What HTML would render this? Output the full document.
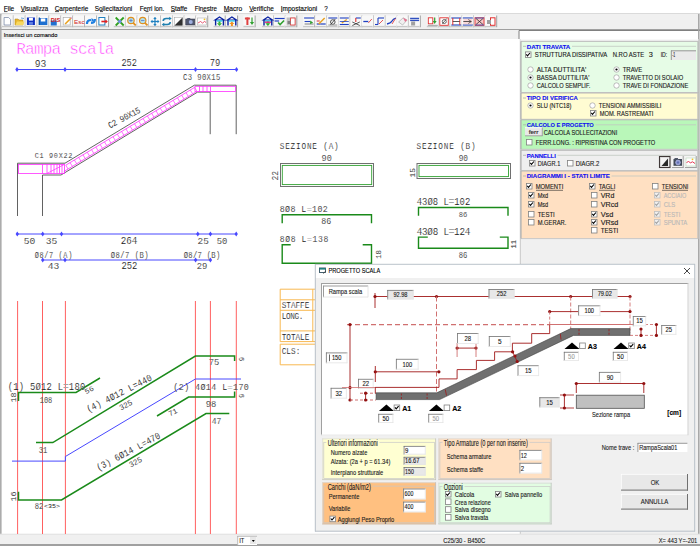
<!DOCTYPE html>
<html><head><meta charset="utf-8"><title>Rampa scala</title>
<style>html,body{margin:0;padding:0;background:#f0f0f0;overflow:hidden}svg{display:block;font-family:"Liberation Sans",sans-serif}</style>
</head><body>
<svg width="700" height="546" viewBox="0 0 700 546">
<rect x="0" y="0" width="700" height="546" fill="#f0f0f0" />
<rect x="0" y="0" width="700" height="14" fill="#ffffff" />
<line x1="0" y1="13.5" x2="700" y2="13.5" stroke="#dadada" stroke-width="1" />
<text x="3.7" y="10.6" font-size="6.67" fill="#000" textLength="10.6" lengthAdjust="spacingAndGlyphs" stroke="#000" stroke-width="0.12">File</text>
<text x="20.7" y="10.6" font-size="6.67" fill="#000" textLength="27.6" lengthAdjust="spacingAndGlyphs" stroke="#000" stroke-width="0.12">Visualizza</text>
<text x="54.7" y="10.6" font-size="6.67" fill="#000" textLength="33.6" lengthAdjust="spacingAndGlyphs" stroke="#000" stroke-width="0.12">Carpenterie</text>
<text x="94.7" y="10.6" font-size="6.67" fill="#000" textLength="37.6" lengthAdjust="spacingAndGlyphs" stroke="#000" stroke-width="0.12">Sollecitazioni</text>
<text x="139.7" y="10.6" font-size="6.67" fill="#000" textLength="24.6" lengthAdjust="spacingAndGlyphs" stroke="#000" stroke-width="0.12">Ferri lon.</text>
<text x="170.7" y="10.6" font-size="6.67" fill="#000" textLength="16.6" lengthAdjust="spacingAndGlyphs" stroke="#000" stroke-width="0.12">Staffe</text>
<text x="194.7" y="10.6" font-size="6.67" fill="#000" textLength="22.3" lengthAdjust="spacingAndGlyphs" stroke="#000" stroke-width="0.12">Finestre</text>
<text x="223.7" y="10.6" font-size="6.67" fill="#000" textLength="18.6" lengthAdjust="spacingAndGlyphs" stroke="#000" stroke-width="0.12">Macro</text>
<text x="249.2" y="10.6" font-size="6.67" fill="#000" textLength="24.6" lengthAdjust="spacingAndGlyphs" stroke="#000" stroke-width="0.12">Verifiche</text>
<text x="280.7" y="10.6" font-size="6.67" fill="#000" textLength="36.6" lengthAdjust="spacingAndGlyphs" stroke="#000" stroke-width="0.12">Impostazioni</text>
<text x="324.3" y="10.6" font-size="6.67" fill="#000" textLength="3.5" lengthAdjust="spacingAndGlyphs" stroke="#000" stroke-width="0.12">?</text>
<line x1="4" y1="11.6" x2="7.5" y2="11.6" stroke="#000" stroke-width="0.7" />
<line x1="21" y1="11.6" x2="25" y2="11.6" stroke="#000" stroke-width="0.7" />
<line x1="55" y1="11.6" x2="59" y2="11.6" stroke="#000" stroke-width="0.7" />
<line x1="100" y1="11.6" x2="103" y2="11.6" stroke="#000" stroke-width="0.7" />
<line x1="145.5" y1="11.6" x2="148.5" y2="11.6" stroke="#000" stroke-width="0.7" />
<line x1="171" y1="11.6" x2="175" y2="11.6" stroke="#000" stroke-width="0.7" />
<line x1="202.5" y1="11.6" x2="206.5" y2="11.6" stroke="#000" stroke-width="0.7" />
<line x1="224" y1="11.6" x2="229.5" y2="11.6" stroke="#000" stroke-width="0.7" />
<line x1="249.5" y1="11.6" x2="253.5" y2="11.6" stroke="#000" stroke-width="0.7" />
<line x1="281" y1="11.6" x2="282.5" y2="11.6" stroke="#000" stroke-width="0.7" />
<rect x="0" y="14" width="700" height="15" fill="#f0f0f0" />
<line x1="0" y1="29.5" x2="700" y2="29.5" stroke="#a0a0a0" stroke-width="1" />
<rect x="0" y="30" width="519" height="9" fill="#f0f0f0" />
<rect x="519" y="30.5" width="181" height="8.5" fill="#ffffff" />
<line x1="519" y1="30.5" x2="700" y2="30.5" stroke="#808080" stroke-width="1" />
<line x1="519" y1="30.5" x2="519" y2="39" stroke="#808080" stroke-width="1" />
<text x="3.7" y="36.9" font-size="6.23" fill="#000" textLength="53.6" lengthAdjust="spacingAndGlyphs" stroke="#000" stroke-width="0.12">Inserisci un comando</text>
<rect x="1.5" y="39" width="518.5" height="495" fill="#ffffff" />
<line x1="0.8" y1="14" x2="0.8" y2="546" stroke="#a8a8a8" stroke-width="1.5" />
<rect x="520" y="39" width="180" height="495" fill="#f0f0f0" />
<line x1="520.3" y1="39" x2="520.3" y2="534" stroke="#c8c8c8" stroke-width="1" />
<line x1="698.8" y1="14" x2="698.8" y2="546" stroke="#a0a0a0" stroke-width="1.4" />
<rect x="0" y="534" width="700" height="12" fill="#f0f0f0" />
<line x1="0" y1="534.2" x2="700" y2="534.2" stroke="#e0e0e0" stroke-width="1" />
<rect x="0" y="544" width="700" height="2" fill="#a0a0a0" />
<rect x="1.6000000000000014" y="15.5" width="11.7" height="11.5" fill="#f8f8f8" />
<line x1="1.6000000000000014" y1="26.5" x2="13.3" y2="26.5" stroke="#c8c8c8" stroke-width="1.4" />
<line x1="12.700000000000001" y1="16" x2="12.700000000000001" y2="27" stroke="#ffffff" stroke-width="0.6" />
<line x1="13.3" y1="15.5" x2="13.3" y2="27.2" stroke="#a0a0a0" stroke-width="1" />
<rect x="13.510000000000002" y="15.5" width="11.7" height="11.5" fill="#f8f8f8" />
<line x1="13.510000000000002" y1="26.5" x2="25.21" y2="26.5" stroke="#c8c8c8" stroke-width="1.4" />
<line x1="24.61" y1="16" x2="24.61" y2="27" stroke="#ffffff" stroke-width="0.6" />
<line x1="25.21" y1="15.5" x2="25.21" y2="27.2" stroke="#a0a0a0" stroke-width="1" />
<rect x="25.420000000000005" y="15.5" width="11.7" height="11.5" fill="#f8f8f8" />
<line x1="25.420000000000005" y1="26.5" x2="37.120000000000005" y2="26.5" stroke="#c8c8c8" stroke-width="1.4" />
<line x1="36.52" y1="16" x2="36.52" y2="27" stroke="#ffffff" stroke-width="0.6" />
<line x1="37.120000000000005" y1="15.5" x2="37.120000000000005" y2="27.2" stroke="#a0a0a0" stroke-width="1" />
<rect x="37.33" y="15.5" width="11.7" height="11.5" fill="#f8f8f8" />
<line x1="37.33" y1="26.5" x2="49.03" y2="26.5" stroke="#c8c8c8" stroke-width="1.4" />
<line x1="48.43" y1="16" x2="48.43" y2="27" stroke="#ffffff" stroke-width="0.6" />
<line x1="49.03" y1="15.5" x2="49.03" y2="27.2" stroke="#a0a0a0" stroke-width="1" />
<rect x="49.239999999999995" y="15.5" width="11.7" height="11.5" fill="#f8f8f8" />
<line x1="49.239999999999995" y1="26.5" x2="60.94" y2="26.5" stroke="#c8c8c8" stroke-width="1.4" />
<line x1="60.339999999999996" y1="16" x2="60.339999999999996" y2="27" stroke="#ffffff" stroke-width="0.6" />
<line x1="60.94" y1="15.5" x2="60.94" y2="27.2" stroke="#a0a0a0" stroke-width="1" />
<rect x="61.14999999999999" y="15.5" width="11.7" height="11.5" fill="#f8f8f8" />
<line x1="61.14999999999999" y1="26.5" x2="72.85" y2="26.5" stroke="#c8c8c8" stroke-width="1.4" />
<line x1="72.24999999999999" y1="16" x2="72.24999999999999" y2="27" stroke="#ffffff" stroke-width="0.6" />
<line x1="72.85" y1="15.5" x2="72.85" y2="27.2" stroke="#a0a0a0" stroke-width="1" />
<rect x="73.06" y="15.5" width="11.7" height="11.5" fill="#f8f8f8" />
<line x1="73.06" y1="26.5" x2="84.76" y2="26.5" stroke="#c8c8c8" stroke-width="1.4" />
<line x1="84.16" y1="16" x2="84.16" y2="27" stroke="#ffffff" stroke-width="0.6" />
<line x1="84.76" y1="15.5" x2="84.76" y2="27.2" stroke="#a0a0a0" stroke-width="1" />
<rect x="84.97" y="15.5" width="11.7" height="11.5" fill="#f8f8f8" />
<line x1="84.97" y1="26.5" x2="96.67" y2="26.5" stroke="#c8c8c8" stroke-width="1.4" />
<line x1="96.07" y1="16" x2="96.07" y2="27" stroke="#ffffff" stroke-width="0.6" />
<line x1="96.67" y1="15.5" x2="96.67" y2="27.2" stroke="#a0a0a0" stroke-width="1" />
<rect x="96.88" y="15.5" width="11.7" height="11.5" fill="#f8f8f8" />
<line x1="96.88" y1="26.5" x2="108.58" y2="26.5" stroke="#c8c8c8" stroke-width="1.4" />
<line x1="107.97999999999999" y1="16" x2="107.97999999999999" y2="27" stroke="#ffffff" stroke-width="0.6" />
<line x1="108.58" y1="15.5" x2="108.58" y2="27.2" stroke="#a0a0a0" stroke-width="1" />
<rect x="113.7" y="15.5" width="11.7" height="11.5" fill="#f8f8f8" />
<line x1="113.7" y1="26.5" x2="125.4" y2="26.5" stroke="#c8c8c8" stroke-width="1.4" />
<line x1="124.8" y1="16" x2="124.8" y2="27" stroke="#ffffff" stroke-width="0.6" />
<line x1="125.4" y1="15.5" x2="125.4" y2="27.2" stroke="#a0a0a0" stroke-width="1" />
<rect x="125.46" y="15.5" width="11.7" height="11.5" fill="#f8f8f8" />
<line x1="125.46" y1="26.5" x2="137.16" y2="26.5" stroke="#c8c8c8" stroke-width="1.4" />
<line x1="136.56" y1="16" x2="136.56" y2="27" stroke="#ffffff" stroke-width="0.6" />
<line x1="137.16" y1="15.5" x2="137.16" y2="27.2" stroke="#a0a0a0" stroke-width="1" />
<rect x="137.22000000000003" y="15.5" width="11.7" height="11.5" fill="#f8f8f8" />
<line x1="137.22000000000003" y1="26.5" x2="148.92000000000002" y2="26.5" stroke="#c8c8c8" stroke-width="1.4" />
<line x1="148.32000000000002" y1="16" x2="148.32000000000002" y2="27" stroke="#ffffff" stroke-width="0.6" />
<line x1="148.92000000000002" y1="15.5" x2="148.92000000000002" y2="27.2" stroke="#a0a0a0" stroke-width="1" />
<rect x="148.98000000000002" y="15.5" width="11.7" height="11.5" fill="#f8f8f8" />
<line x1="148.98000000000002" y1="26.5" x2="160.68" y2="26.5" stroke="#c8c8c8" stroke-width="1.4" />
<line x1="160.08" y1="16" x2="160.08" y2="27" stroke="#ffffff" stroke-width="0.6" />
<line x1="160.68" y1="15.5" x2="160.68" y2="27.2" stroke="#a0a0a0" stroke-width="1" />
<rect x="160.74" y="15.5" width="11.7" height="11.5" fill="#f8f8f8" />
<line x1="160.74" y1="26.5" x2="172.44" y2="26.5" stroke="#c8c8c8" stroke-width="1.4" />
<line x1="171.84" y1="16" x2="171.84" y2="27" stroke="#ffffff" stroke-width="0.6" />
<line x1="172.44" y1="15.5" x2="172.44" y2="27.2" stroke="#a0a0a0" stroke-width="1" />
<rect x="172.5" y="15.5" width="11.7" height="11.5" fill="#f8f8f8" />
<line x1="172.5" y1="26.5" x2="184.2" y2="26.5" stroke="#c8c8c8" stroke-width="1.4" />
<line x1="183.6" y1="16" x2="183.6" y2="27" stroke="#ffffff" stroke-width="0.6" />
<line x1="184.2" y1="15.5" x2="184.2" y2="27.2" stroke="#a0a0a0" stroke-width="1" />
<rect x="184.26000000000002" y="15.5" width="11.7" height="11.5" fill="#f8f8f8" />
<line x1="184.26000000000002" y1="26.5" x2="195.96" y2="26.5" stroke="#c8c8c8" stroke-width="1.4" />
<line x1="195.36" y1="16" x2="195.36" y2="27" stroke="#ffffff" stroke-width="0.6" />
<line x1="195.96" y1="15.5" x2="195.96" y2="27.2" stroke="#a0a0a0" stroke-width="1" />
<rect x="196.02" y="15.5" width="11.7" height="11.5" fill="#f8f8f8" />
<line x1="196.02" y1="26.5" x2="207.72" y2="26.5" stroke="#c8c8c8" stroke-width="1.4" />
<line x1="207.12" y1="16" x2="207.12" y2="27" stroke="#ffffff" stroke-width="0.6" />
<line x1="207.72" y1="15.5" x2="207.72" y2="27.2" stroke="#a0a0a0" stroke-width="1" />
<rect x="213.5" y="15.5" width="11.7" height="11.5" fill="#f8f8f8" />
<line x1="213.5" y1="26.5" x2="225.2" y2="26.5" stroke="#c8c8c8" stroke-width="1.4" />
<line x1="224.6" y1="16" x2="224.6" y2="27" stroke="#ffffff" stroke-width="0.6" />
<line x1="225.2" y1="15.5" x2="225.2" y2="27.2" stroke="#a0a0a0" stroke-width="1" />
<rect x="225.9" y="15.5" width="11.7" height="11.5" fill="#f8f8f8" />
<line x1="225.9" y1="26.5" x2="237.6" y2="26.5" stroke="#c8c8c8" stroke-width="1.4" />
<line x1="237.0" y1="16" x2="237.0" y2="27" stroke="#ffffff" stroke-width="0.6" />
<line x1="237.6" y1="15.5" x2="237.6" y2="27.2" stroke="#a0a0a0" stroke-width="1" />
<rect x="243.4" y="15.5" width="11.7" height="11.5" fill="#f8f8f8" />
<line x1="243.4" y1="26.5" x2="255.1" y2="26.5" stroke="#c8c8c8" stroke-width="1.4" />
<line x1="254.5" y1="16" x2="254.5" y2="27" stroke="#ffffff" stroke-width="0.6" />
<line x1="255.1" y1="15.5" x2="255.1" y2="27.2" stroke="#a0a0a0" stroke-width="1" />
<rect x="261.9" y="15.5" width="11.7" height="11.5" fill="#f8f8f8" />
<line x1="261.9" y1="26.5" x2="273.59999999999997" y2="26.5" stroke="#c8c8c8" stroke-width="1.4" />
<line x1="273.0" y1="16" x2="273.0" y2="27" stroke="#ffffff" stroke-width="0.6" />
<line x1="273.59999999999997" y1="15.5" x2="273.59999999999997" y2="27.2" stroke="#a0a0a0" stroke-width="1" />
<rect x="273.6" y="15.5" width="11.7" height="11.5" fill="#f8f8f8" />
<line x1="273.6" y1="26.5" x2="285.3" y2="26.5" stroke="#c8c8c8" stroke-width="1.4" />
<line x1="284.70000000000005" y1="16" x2="284.70000000000005" y2="27" stroke="#ffffff" stroke-width="0.6" />
<line x1="285.3" y1="15.5" x2="285.3" y2="27.2" stroke="#a0a0a0" stroke-width="1" />
<rect x="285.1" y="15.5" width="11.7" height="11.5" fill="#f8f8f8" />
<line x1="285.1" y1="26.5" x2="296.8" y2="26.5" stroke="#c8c8c8" stroke-width="1.4" />
<line x1="296.20000000000005" y1="16" x2="296.20000000000005" y2="27" stroke="#ffffff" stroke-width="0.6" />
<line x1="296.8" y1="15.5" x2="296.8" y2="27.2" stroke="#a0a0a0" stroke-width="1" />
<polygon points="4.100000000000001,17.5 8.600000000000001,17.5 10.600000000000001,19.5 10.600000000000001,25 4.100000000000001,25" fill="#ffffff" stroke="#7080a0" stroke-width="0.7" />
<polygon points="15.010000000000002,19 18.01,19 19.01,20 23.01,20 23.01,25 15.010000000000002,25" fill="#e8b830" stroke="#b08010" stroke-width="0.5" />
<polygon points="15.510000000000002,25 17.01,21.5 24.51,21.5 23.01,25" fill="#f8d860" stroke="none" stroke-width="1" />
<line x1="21.01" y1="18" x2="24.01" y2="18.5" stroke="#5090d0" stroke-width="0.8" />
<rect x="26.920000000000005" y="17.5" width="8" height="7.5" fill="#1030c0" />
<rect x="28.920000000000005" y="17.8" width="4" height="2.8" fill="#ffffff" />
<rect x="28.920000000000005" y="22" width="4" height="2.8" fill="#6080e0" />
<rect x="38.83" y="18" width="8.5" height="7" fill="#2070d0" />
<rect x="40.83" y="18.5" width="4.5" height="3" fill="#ffffff" />
<line x1="39.33" y1="17.5" x2="39.33" y2="25" stroke="#1050a0" stroke-width="1.2" />
<rect x="50.739999999999995" y="20.5" width="6" height="5" fill="#2070d0" />
<text x="50.739999999999995" y="21.7" font-size="5.2" fill="#d02020" font-weight="bold" textLength="9.5" lengthAdjust="spacingAndGlyphs" >DIS</text>
<rect x="63.14999999999999" y="17.5" width="7" height="7.5" fill="#ffffff" stroke="#a0a0a0" stroke-width="0.6" />
<line x1="65.14999999999999" y1="24" x2="71.14999999999999" y2="18" stroke="#e8a020" stroke-width="1.6" />
<line x1="70.64999999999999" y1="18.5" x2="71.64999999999999" y2="17.5" stroke="#e090c0" stroke-width="1.4" />
<text x="74.06" y="24" font-size="6" fill="#d02020" textLength="10.5" lengthAdjust="spacingAndGlyphs" >Esc</text>
<path d="M86.97,24 q0,-4 4,-4 M94.97,19 q0,4 -4,4" stroke="#2080e0" stroke-width="2.2" fill="none"/>
<polygon points="91.47,18 94.47,20.2 91.47,22" fill="#2080e0" stroke="none" stroke-width="1" />
<rect x="98.88" y="17.5" width="6" height="7.5" fill="#ffffff" stroke="#2080c0" stroke-width="1" />
<line x1="101.38" y1="21.5" x2="106.88" y2="21.5" stroke="#e02020" stroke-width="1.6" />
<polygon points="105.38,19.5 107.88,21.5 105.38,23.5" fill="#e02020" stroke="none" stroke-width="1" />
<line x1="115.7" y1="17.5" x2="123.7" y2="25.5" stroke="#30a020" stroke-width="1.8" />
<line x1="123.7" y1="17.5" x2="115.7" y2="25.5" stroke="#30a020" stroke-width="1.8" />
<circle cx="119.7" cy="21.5" r="1.8" fill="#7090e0" stroke="none" stroke-width="1"/>
<circle cx="130.95999999999998" cy="20.5" r="3.2" fill="#b0e0f0" stroke="#e09020" stroke-width="1.2"/>
<line x1="133.16" y1="22.8" x2="135.76" y2="25.3" stroke="#e09020" stroke-width="1.8" />
<line x1="129.26" y1="20.5" x2="132.66" y2="20.5" stroke="#5070c0" stroke-width="0.7" />
<line x1="130.95999999999998" y1="18.8" x2="130.95999999999998" y2="22.2" stroke="#5070c0" stroke-width="0.7" />
<circle cx="142.72000000000003" cy="20.5" r="3.2" fill="#b0e0f0" stroke="#e09020" stroke-width="1.2"/>
<line x1="144.92000000000002" y1="22.8" x2="147.52000000000004" y2="25.3" stroke="#e09020" stroke-width="1.8" />
<line x1="141.02000000000004" y1="20.5" x2="144.42000000000002" y2="20.5" stroke="#5070c0" stroke-width="0.7" />
<line x1="154.98000000000002" y1="17.5" x2="154.98000000000002" y2="25.5" stroke="#2080c0" stroke-width="1.2" />
<line x1="150.98000000000002" y1="21.5" x2="158.98000000000002" y2="21.5" stroke="#2080c0" stroke-width="1.2" />
<polygon points="153.28000000000003,19 154.98000000000002,17 156.68,19" fill="#2080c0" stroke="none" stroke-width="1" />
<polygon points="153.28000000000003,24 154.98000000000002,26 156.68,24" fill="#2080c0" stroke="none" stroke-width="1" />
<polygon points="152.48000000000002,19.8 150.48000000000002,21.5 152.48000000000002,23.2" fill="#2080c0" stroke="none" stroke-width="1" />
<polygon points="157.48000000000002,19.8 159.48000000000002,21.5 157.48000000000002,23.2" fill="#2080c0" stroke="none" stroke-width="1" />
<path d="M163.24,21 q0,-2.5 3,-2.5 h4 M170.24,22 q0,2.5 -3,2.5 h-4" stroke="#2080b0" stroke-width="1.6" fill="none"/>
<polygon points="169.24,16.8 171.74,18.5 169.24,20.2" fill="#2080b0" stroke="none" stroke-width="1" />
<polygon points="164.24,22.8 161.74,24.5 164.24,26.2" fill="#2080b0" stroke="none" stroke-width="1" />
<rect x="174.5" y="17.5" width="8" height="8" fill="#ffffff" stroke="#a0a0a0" stroke-width="0.5" />
<polygon points="182.5,17.5 182.5,25.5 174.5,25.5" fill="#303030" stroke="none" stroke-width="1" />
<rect x="185.76000000000002" y="19" width="9" height="6" fill="#505870" stroke="#303040" stroke-width="0.5" />
<circle cx="190.76000000000002" cy="22" r="2" fill="#a0b0e0" stroke="none" stroke-width="1"/>
<rect x="187.26000000000002" y="18" width="3" height="1.5" fill="#505870" />
<rect x="197.52" y="18" width="9" height="7" fill="#ffffff" stroke="#b0b0b0" stroke-width="0.6" />
<polyline points="198.02,23 200.52,21.5 202.52,23 204.52,21.5 206.02,22.5" stroke="#e03050" stroke-width="0.8" fill="none" />
<circle cx="204.52" cy="19.3" r="0.9" fill="#f0c020" stroke="none" stroke-width="1"/>
<polygon points="215,20 219.5,17 224,20" fill="none" stroke="#0820a0" stroke-width="1.2" />
<line x1="215.6" y1="20" x2="215.6" y2="25.5" stroke="#0820a0" stroke-width="1.4" />
<line x1="223.4" y1="20" x2="223.4" y2="25.5" stroke="#0820a0" stroke-width="1.4" />
<rect x="216.5" y="20.2" width="6" height="1.5" fill="#40d0f0" />
<rect x="218.5" y="21.5" width="2" height="2" fill="#30b030" />
<polygon points="217,23.3 219.5,26 222,23.3" fill="#30b030" stroke="none" stroke-width="1" />
<polygon points="227.4,20 231.9,17 236.4,20" fill="none" stroke="#0820a0" stroke-width="1.2" />
<line x1="228.0" y1="20" x2="228.0" y2="25.5" stroke="#0820a0" stroke-width="1.4" />
<line x1="235.8" y1="20" x2="235.8" y2="25.5" stroke="#0820a0" stroke-width="1.4" />
<rect x="228.9" y="20.2" width="6" height="1.5" fill="#40d0f0" />
<polygon points="229.4,24 231.9,21.5 234.4,24" fill="#f09020" stroke="none" stroke-width="1" />
<rect x="230.9" y="23.8" width="2" height="2.2" fill="#f09020" />
<rect x="244.9" y="17.5" width="5" height="2" fill="#e04040" />
<rect x="246.4" y="17.5" width="2" height="7.5" fill="#e04040" />
<rect x="251.4" y="17.5" width="1.2" height="5" fill="#30a030" />
<polygon points="249.9,22 252.0,25 254.1,22" fill="#30a030" stroke="none" stroke-width="1" />
<polygon points="263.4,20 267.9,17 272.4,20" fill="none" stroke="#0820a0" stroke-width="1.2" />
<line x1="264.0" y1="20" x2="264.0" y2="25.5" stroke="#0820a0" stroke-width="1.4" />
<line x1="271.79999999999995" y1="20" x2="271.79999999999995" y2="25.5" stroke="#0820a0" stroke-width="1.4" />
<rect x="264.9" y="20.2" width="6" height="1.5" fill="#40d0f0" />
<rect x="266.9" y="21.5" width="2" height="2" fill="#30b030" />
<polygon points="265.4,23.3 267.9,26 270.4,23.3" fill="#30b030" stroke="none" stroke-width="1" />
<rect x="264.9" y="21.5" width="6" height="1.4" fill="#e03080" />
<rect x="274.6" y="18" width="10" height="7" fill="#f8f8f8" />
<line x1="274.6" y1="18.5" x2="284.6" y2="18.5" stroke="#2040c0" stroke-width="1.2" />
<line x1="274.6" y1="21" x2="279.1" y2="21" stroke="#2040c0" stroke-width="1.2" />
<polyline points="278.1,22.5 280.1,24.5 284.1,20.5" stroke="#30a030" stroke-width="1.6" fill="none" />
<rect x="286.6" y="17.5" width="9" height="8" fill="#c0c0c0" />
<rect x="290.6" y="18" width="4.5" height="7" fill="#ffffff" stroke="#e03030" stroke-width="0.8" />
<rect x="287.6" y="21" width="3" height="3" fill="#808080" />
<rect x="303.1" y="15.5" width="11.7" height="11.5" fill="#f8f8f8" />
<line x1="303.1" y1="26.5" x2="314.8" y2="26.5" stroke="#c8c8c8" stroke-width="1.4" />
<line x1="314.20000000000005" y1="16" x2="314.20000000000005" y2="27" stroke="#ffffff" stroke-width="0.6" />
<line x1="314.8" y1="15.5" x2="314.8" y2="27.2" stroke="#a0a0a0" stroke-width="1" />
<rect x="304.1" y="17.5" width="10" height="8" fill="#f8f8f8" />
<line x1="304.1" y1="18" x2="314.1" y2="18" stroke="#2040c0" stroke-width="1.1" />
<line x1="304.6" y1="21.5" x2="310.1" y2="21.5" stroke="#2040c0" stroke-width="1.1" />
<line x1="304.6" y1="24" x2="313.6" y2="24" stroke="#808080" stroke-width="1" />
<polygon points="310.1,20.5 313.1,22.5 310.1,24.3" fill="#30a030" stroke="none" stroke-width="1" />
<rect x="315.2" y="15.5" width="11.7" height="11.5" fill="#f8f8f8" />
<line x1="315.2" y1="26.5" x2="326.9" y2="26.5" stroke="#c8c8c8" stroke-width="1.4" />
<line x1="326.3" y1="16" x2="326.3" y2="27" stroke="#ffffff" stroke-width="0.6" />
<line x1="326.9" y1="15.5" x2="326.9" y2="27.2" stroke="#a0a0a0" stroke-width="1" />
<rect x="316.2" y="17.5" width="10" height="8" fill="#f8f8f8" />
<line x1="316.7" y1="24" x2="320.7" y2="24" stroke="#2040c0" stroke-width="1.2" />
<line x1="320.7" y1="24" x2="325.7" y2="24" stroke="#2040c0" stroke-width="1.2" />
<line x1="318.7" y1="24" x2="324.7" y2="18" stroke="#e8a020" stroke-width="1.4" />
<line x1="319.7" y1="21" x2="316.7" y2="21" stroke="#e03030" stroke-width="1" />
<rect x="326.8" y="15.5" width="11.7" height="11.5" fill="#f8f8f8" />
<line x1="326.8" y1="26.5" x2="338.5" y2="26.5" stroke="#c8c8c8" stroke-width="1.4" />
<line x1="337.90000000000003" y1="16" x2="337.90000000000003" y2="27" stroke="#ffffff" stroke-width="0.6" />
<line x1="338.5" y1="15.5" x2="338.5" y2="27.2" stroke="#a0a0a0" stroke-width="1" />
<rect x="327.8" y="17.5" width="10" height="8" fill="#f8f8f8" />
<line x1="328.3" y1="18" x2="337.3" y2="18" stroke="#2040c0" stroke-width="1.1" />
<circle cx="332.8" cy="22" r="2.3" fill="none" stroke="#303030" stroke-width="0.8"/>
<line x1="330.3" y1="25" x2="335.3" y2="19" stroke="#303030" stroke-width="0.8" />
<line x1="328.3" y1="25" x2="337.3" y2="25" stroke="#808080" stroke-width="0.8" />
<rect x="338.3" y="15.5" width="11.7" height="11.5" fill="#f8f8f8" />
<line x1="338.3" y1="26.5" x2="350.0" y2="26.5" stroke="#c8c8c8" stroke-width="1.4" />
<line x1="349.40000000000003" y1="16" x2="349.40000000000003" y2="27" stroke="#ffffff" stroke-width="0.6" />
<line x1="350.0" y1="15.5" x2="350.0" y2="27.2" stroke="#a0a0a0" stroke-width="1" />
<rect x="339.3" y="17.5" width="10" height="8" fill="#f8f8f8" />
<line x1="339.8" y1="18" x2="348.8" y2="18" stroke="#2040c0" stroke-width="1.1" />
<line x1="339.8" y1="24.5" x2="348.8" y2="24.5" stroke="#2040c0" stroke-width="1.1" />
<line x1="341.8" y1="23" x2="346.8" y2="19.5" stroke="#e8a020" stroke-width="1.5" />
<line x1="339.8" y1="21.5" x2="348.8" y2="21.5" stroke="#2040c0" stroke-width="0.8" />
<rect x="350.3" y="15.5" width="11.7" height="11.5" fill="#f8f8f8" />
<line x1="350.3" y1="26.5" x2="362.0" y2="26.5" stroke="#c8c8c8" stroke-width="1.4" />
<line x1="361.40000000000003" y1="16" x2="361.40000000000003" y2="27" stroke="#ffffff" stroke-width="0.6" />
<line x1="362.0" y1="15.5" x2="362.0" y2="27.2" stroke="#a0a0a0" stroke-width="1" />
<rect x="351.3" y="17.5" width="10" height="8" fill="#f8f8f8" />
<line x1="355.8" y1="18" x2="360.8" y2="18" stroke="#2040c0" stroke-width="1.1" />
<line x1="355.8" y1="18" x2="355.8" y2="22" stroke="#e03030" stroke-width="1.1" />
<line x1="352.3" y1="22" x2="359.8" y2="25.5" stroke="#303030" stroke-width="0.8" />
<line x1="359.8" y1="22" x2="352.3" y2="25.5" stroke="#303030" stroke-width="0.8" />
<rect x="361.8" y="15.5" width="11.7" height="11.5" fill="#f8f8f8" />
<line x1="361.8" y1="26.5" x2="373.5" y2="26.5" stroke="#c8c8c8" stroke-width="1.4" />
<line x1="372.90000000000003" y1="16" x2="372.90000000000003" y2="27" stroke="#ffffff" stroke-width="0.6" />
<line x1="373.5" y1="15.5" x2="373.5" y2="27.2" stroke="#a0a0a0" stroke-width="1" />
<rect x="362.8" y="17.5" width="10" height="8" fill="#f8f8f8" />
<line x1="363.3" y1="21.5" x2="368.3" y2="21.5" stroke="#2040c0" stroke-width="1.3" />
<line x1="368.3" y1="23" x2="371.8" y2="19" stroke="#e03030" stroke-width="0.8" />
<rect x="373.5" y="15.5" width="11.7" height="11.5" fill="#f8f8f8" />
<line x1="373.5" y1="26.5" x2="385.2" y2="26.5" stroke="#c8c8c8" stroke-width="1.4" />
<line x1="384.6" y1="16" x2="384.6" y2="27" stroke="#ffffff" stroke-width="0.6" />
<line x1="385.2" y1="15.5" x2="385.2" y2="27.2" stroke="#a0a0a0" stroke-width="1" />
<rect x="374.5" y="17.5" width="10" height="8" fill="#f8f8f8" />
<line x1="375" y1="24.5" x2="378" y2="24.5" stroke="#2040c0" stroke-width="1.1" />
<line x1="378" y1="24.5" x2="378" y2="18" stroke="#2040c0" stroke-width="1.1" />
<line x1="378" y1="18" x2="384" y2="18" stroke="#2040c0" stroke-width="1.1" />
<line x1="379" y1="24" x2="383" y2="20" stroke="#e03030" stroke-width="0.8" />
<rect x="385.5" y="15.5" width="11.7" height="11.5" fill="#f8f8f8" />
<line x1="385.5" y1="26.5" x2="397.2" y2="26.5" stroke="#c8c8c8" stroke-width="1.4" />
<line x1="396.6" y1="16" x2="396.6" y2="27" stroke="#ffffff" stroke-width="0.6" />
<line x1="397.2" y1="15.5" x2="397.2" y2="27.2" stroke="#a0a0a0" stroke-width="1" />
<rect x="386.5" y="17.5" width="10" height="8" fill="#f8f8f8" />
<path d="M387,24 q4,-1 5,-3 t4,-3" stroke="#2040c0" stroke-width="1.3" fill="none"/>
<line x1="392" y1="24" x2="395.5" y2="18.5" stroke="#e03030" stroke-width="0.8" />
<rect x="396.6" y="15.5" width="11.7" height="11.5" fill="#f8f8f8" />
<line x1="396.6" y1="26.5" x2="408.3" y2="26.5" stroke="#c8c8c8" stroke-width="1.4" />
<line x1="407.70000000000005" y1="16" x2="407.70000000000005" y2="27" stroke="#ffffff" stroke-width="0.6" />
<line x1="408.3" y1="15.5" x2="408.3" y2="27.2" stroke="#a0a0a0" stroke-width="1" />
<rect x="397.6" y="17.5" width="10" height="8" fill="#f8f8f8" />
<polygon points="398.6,22 403.1,17.8 407.1,20 402.6,25" fill="#f0f0f0" stroke="#a0a0a0" stroke-width="0.6" />
<polygon points="403.1,17.8 407.1,20 405.1,22" fill="#e87090" stroke="none" stroke-width="1" />
<rect x="408.6" y="15.5" width="11.7" height="11.5" fill="#f8f8f8" />
<line x1="408.6" y1="26.5" x2="420.3" y2="26.5" stroke="#c8c8c8" stroke-width="1.4" />
<line x1="419.70000000000005" y1="16" x2="419.70000000000005" y2="27" stroke="#ffffff" stroke-width="0.6" />
<line x1="420.3" y1="15.5" x2="420.3" y2="27.2" stroke="#a0a0a0" stroke-width="1" />
<rect x="409.6" y="17.5" width="10" height="8" fill="#f8f8f8" />
<line x1="410.1" y1="18.5" x2="419.1" y2="18.5" stroke="#3050c0" stroke-width="1.5" />
<line x1="410.1" y1="20.5" x2="419.1" y2="20.5" stroke="#3050c0" stroke-width="1.2" />
<rect x="411.1" y="21.5" width="4" height="4" fill="#a0a0a0" />
<rect x="426.8" y="15.5" width="11.7" height="11.5" fill="#f8f8f8" />
<line x1="426.8" y1="26.5" x2="438.5" y2="26.5" stroke="#c8c8c8" stroke-width="1.4" />
<line x1="437.90000000000003" y1="16" x2="437.90000000000003" y2="27" stroke="#ffffff" stroke-width="0.6" />
<line x1="438.5" y1="15.5" x2="438.5" y2="27.2" stroke="#a0a0a0" stroke-width="1" />
<rect x="427.8" y="17.5" width="10" height="8" fill="#f8f8f8" />
<rect x="428.3" y="17.8" width="4.5" height="6" fill="#ffffff" stroke="#e03030" stroke-width="0.9" />
<rect x="434.1" y="17.5" width="1.2" height="4" fill="#30a030" />
<polygon points="432.8,21 434.7,24 436.6,21" fill="#30a030" stroke="none" stroke-width="1" />
<rect x="427.8" y="24.8" width="10" height="1.2" fill="#b0b0b0" />
<rect x="438.3" y="15.5" width="11.7" height="11.5" fill="#f8f8f8" />
<line x1="438.3" y1="26.5" x2="450.0" y2="26.5" stroke="#c8c8c8" stroke-width="1.4" />
<line x1="449.40000000000003" y1="16" x2="449.40000000000003" y2="27" stroke="#ffffff" stroke-width="0.6" />
<line x1="450.0" y1="15.5" x2="450.0" y2="27.2" stroke="#a0a0a0" stroke-width="1" />
<rect x="439.3" y="17.5" width="10" height="8" fill="#f8f8f8" />
<rect x="439.8" y="17.8" width="8.5" height="7.5" fill="#ffffff" stroke="#e03030" stroke-width="0.9" />
<circle cx="444.3" cy="21.5" r="2" fill="none" stroke="#303030" stroke-width="0.7"/>
<line x1="442.3" y1="24" x2="446.8" y2="18.5" stroke="#303030" stroke-width="0.7" />
<rect x="450.3" y="15.5" width="11.7" height="11.5" fill="#f8f8f8" />
<line x1="450.3" y1="26.5" x2="462.0" y2="26.5" stroke="#c8c8c8" stroke-width="1.4" />
<line x1="461.40000000000003" y1="16" x2="461.40000000000003" y2="27" stroke="#ffffff" stroke-width="0.6" />
<line x1="462.0" y1="15.5" x2="462.0" y2="27.2" stroke="#a0a0a0" stroke-width="1" />
<rect x="451.3" y="17.5" width="10" height="8" fill="#f8f8f8" />
<rect x="451.3" y="17.8" width="10" height="7.5" fill="#ffffff" stroke="#3050c0" stroke-width="0" />
<line x1="451.3" y1="18" x2="461.3" y2="18" stroke="#3050c0" stroke-width="1.2" />
<line x1="451.3" y1="25" x2="461.3" y2="25" stroke="#3050c0" stroke-width="1.2" />
<line x1="452.8" y1="18" x2="452.8" y2="25" stroke="#e03030" stroke-width="1" />
<line x1="459.8" y1="18" x2="459.8" y2="25" stroke="#e03030" stroke-width="1" />
<line x1="452.8" y1="21.5" x2="459.8" y2="21.5" stroke="#303030" stroke-width="0.8" />
<rect x="461.8" y="15.5" width="11.7" height="11.5" fill="#f8f8f8" />
<line x1="461.8" y1="26.5" x2="473.5" y2="26.5" stroke="#c8c8c8" stroke-width="1.4" />
<line x1="472.90000000000003" y1="16" x2="472.90000000000003" y2="27" stroke="#ffffff" stroke-width="0.6" />
<line x1="473.5" y1="15.5" x2="473.5" y2="27.2" stroke="#a0a0a0" stroke-width="1" />
<rect x="462.8" y="17.5" width="10" height="8" fill="#f8f8f8" />
<line x1="462.8" y1="18" x2="472.8" y2="18" stroke="#3050c0" stroke-width="1.2" />
<line x1="462.8" y1="25" x2="472.8" y2="25" stroke="#3050c0" stroke-width="1.2" />
<rect x="463.3" y="18.8" width="9" height="5.5" fill="#f8d8d8" />
<line x1="463.3" y1="21.5" x2="471.3" y2="21.5" stroke="#303030" stroke-width="0.8" />
<line x1="468.3" y1="19.5" x2="471.3" y2="21.5" stroke="#303030" stroke-width="0.7" />
<line x1="468.3" y1="23.5" x2="471.3" y2="21.5" stroke="#303030" stroke-width="0.7" />
<rect x="473.5" y="15.5" width="11.7" height="11.5" fill="#f8f8f8" />
<line x1="473.5" y1="26.5" x2="485.2" y2="26.5" stroke="#c8c8c8" stroke-width="1.4" />
<line x1="484.6" y1="16" x2="484.6" y2="27" stroke="#ffffff" stroke-width="0.6" />
<line x1="485.2" y1="15.5" x2="485.2" y2="27.2" stroke="#a0a0a0" stroke-width="1" />
<rect x="474.5" y="17.5" width="10" height="8" fill="#f8f8f8" />
<rect x="475" y="17.8" width="9" height="7.5" fill="#f8c8c8" stroke="#e03030" stroke-width="0.9" />
<line x1="476" y1="18.5" x2="483" y2="24.5" stroke="#303030" stroke-width="0.8" />
<line x1="483" y1="18.5" x2="476" y2="24.5" stroke="#303030" stroke-width="0.8" />
<line x1="475" y1="18" x2="484" y2="18" stroke="#3050c0" stroke-width="0.8" />
<line x1="475" y1="25" x2="484" y2="25" stroke="#3050c0" stroke-width="0.8" />
<rect x="485.0" y="15.5" width="11.7" height="11.5" fill="#f8f8f8" />
<line x1="485.0" y1="26.5" x2="496.7" y2="26.5" stroke="#c8c8c8" stroke-width="1.4" />
<line x1="496.1" y1="16" x2="496.1" y2="27" stroke="#ffffff" stroke-width="0.6" />
<line x1="496.7" y1="15.5" x2="496.7" y2="27.2" stroke="#a0a0a0" stroke-width="1" />
<rect x="486.0" y="17.5" width="10" height="8" fill="#f8f8f8" />
<rect x="490.5" y="17.8" width="4.5" height="7.5" fill="#ffffff" stroke="#e03030" stroke-width="1" />
<rect x="487.0" y="20" width="4" height="4" fill="#a0a0a0" />
<text transform="translate(16.2,53.8) scale(1,1.0)" font-size="16.06" font-family="Liberation Mono" fill="#ff40ff" textLength="98.1" lengthAdjust="spacing" stroke="#fff" stroke-width="0.5">Rampa scala</text>
<line x1="17" y1="69.5" x2="236.5" y2="69.5" stroke="#4848ff" stroke-width="1.0" />
<polygon points="15.3,69.5 17,67.12 18.7,69.5 17,71.88" fill="#4848ff" stroke="none" stroke-width="1" />
<polygon points="63.3,69.5 65,67.12 66.7,69.5 65,71.88" fill="#4848ff" stroke="none" stroke-width="1" />
<polygon points="193.8,69.5 195.5,67.12 197.2,69.5 195.5,71.88" fill="#4848ff" stroke="none" stroke-width="1" />
<polygon points="234.8,69.5 236.5,67.12 238.2,69.5 236.5,71.88" fill="#4848ff" stroke="none" stroke-width="1" />
<text transform="translate(34.7,66.6) scale(1,1.18)" font-size="9.24" font-family="Liberation Mono" fill="#202020" textLength="11.6" lengthAdjust="spacingAndGlyphs" stroke="#fff" stroke-width="0.12">93</text>
<text transform="translate(121.4,66.4) scale(1,1.18)" font-size="9.24" font-family="Liberation Mono" fill="#202020" textLength="15.5" lengthAdjust="spacingAndGlyphs" stroke="#fff" stroke-width="0.12">252</text>
<text transform="translate(209.7,66.4) scale(1,1.18)" font-size="9.24" font-family="Liberation Mono" fill="#202020" textLength="10.6" lengthAdjust="spacingAndGlyphs" stroke="#fff" stroke-width="0.12">79</text>
<text transform="translate(183.1,80) scale(1,1.18)" font-size="7.19" font-family="Liberation Mono" fill="#202020" textLength="37.2" lengthAdjust="spacing" stroke="#fff" stroke-width="0.12">C3 90X15</text>
<text transform="translate(34.7,158.3) scale(1,1.18)" font-size="6.81" font-family="Liberation Mono" fill="#202020" textLength="37.6" lengthAdjust="spacing" stroke="#fff" stroke-width="0.12">C1 90X22</text>
<polyline points="17.5,216 17.5,163.2 65,163.2 194.4,85.2 236.2,85.2 236.2,134.2" stroke="#505050" stroke-width="0.9" fill="none" />
<polyline points="42.5,216 42.5,175 61,175 197.6,92.1 210.2,92.1 210.2,134.2" stroke="#505050" stroke-width="0.9" fill="none" />
<rect x="18.5" y="164.4" width="46" height="9" fill="none" stroke="#ff30ff" stroke-width="0.8" />
<rect x="195" y="86.3" width="40.5" height="5.2" fill="none" stroke="#ff30ff" stroke-width="0.8" />
<line x1="42.5" y1="164.4" x2="42.5" y2="173.4" stroke="#ff30ff" stroke-width="0.8" />
<line x1="47" y1="164.4" x2="47" y2="173.4" stroke="#ff30ff" stroke-width="0.8" />
<line x1="51" y1="164.4" x2="51" y2="173.4" stroke="#ff30ff" stroke-width="0.8" />
<line x1="54" y1="164.4" x2="54" y2="173.4" stroke="#ff30ff" stroke-width="0.8" />
<line x1="57" y1="164.4" x2="57" y2="173.4" stroke="#ff30ff" stroke-width="0.8" />
<line x1="59.5" y1="164.4" x2="59.5" y2="173.4" stroke="#ff30ff" stroke-width="0.8" />
<line x1="62" y1="164.4" x2="62" y2="173.4" stroke="#ff30ff" stroke-width="0.8" />
<line x1="199.5" y1="86.3" x2="199.5" y2="91.5" stroke="#ff30ff" stroke-width="0.8" />
<line x1="203" y1="86.3" x2="203" y2="91.5" stroke="#ff30ff" stroke-width="0.8" />
<line x1="207" y1="86.3" x2="207" y2="91.5" stroke="#ff30ff" stroke-width="0.8" />
<line x1="210.5" y1="86.3" x2="210.5" y2="91.5" stroke="#ff30ff" stroke-width="0.8" />
<line x1="65.8" y1="165.2" x2="194.6" y2="87.4" stroke="#ff30ff" stroke-width="0.8" />
<line x1="63.8" y1="171.6" x2="196.0" y2="91.8" stroke="#ff30ff" stroke-width="0.8" />
<line x1="65.8" y1="165.2" x2="68.09548" y2="169.00063999999998" stroke="#ff30ff" stroke-width="0.7" />
<line x1="70.09333333333333" y1="162.60666666666665" x2="72.38881333333333" y2="166.40730666666664" stroke="#ff30ff" stroke-width="0.7" />
<line x1="74.38666666666667" y1="160.01333333333332" x2="76.68214666666667" y2="163.8139733333333" stroke="#ff30ff" stroke-width="0.7" />
<line x1="78.68" y1="157.42" x2="80.97548" y2="161.22063999999997" stroke="#ff30ff" stroke-width="0.7" />
<line x1="82.97333333333333" y1="154.82666666666665" x2="85.26881333333333" y2="158.62730666666664" stroke="#ff30ff" stroke-width="0.7" />
<line x1="87.26666666666667" y1="152.23333333333332" x2="89.56214666666666" y2="156.0339733333333" stroke="#ff30ff" stroke-width="0.7" />
<line x1="91.56" y1="149.64" x2="93.85548" y2="153.44063999999997" stroke="#ff30ff" stroke-width="0.7" />
<line x1="95.85333333333334" y1="147.04666666666665" x2="98.14881333333334" y2="150.84730666666664" stroke="#ff30ff" stroke-width="0.7" />
<line x1="100.14666666666668" y1="144.45333333333332" x2="102.44214666666667" y2="148.2539733333333" stroke="#ff30ff" stroke-width="0.7" />
<line x1="104.44" y1="141.85999999999999" x2="106.73548" y2="145.66063999999997" stroke="#ff30ff" stroke-width="0.7" />
<line x1="108.73333333333333" y1="139.26666666666665" x2="111.02881333333333" y2="143.06730666666664" stroke="#ff30ff" stroke-width="0.7" />
<line x1="113.02666666666667" y1="136.67333333333335" x2="115.32214666666667" y2="140.47397333333333" stroke="#ff30ff" stroke-width="0.7" />
<line x1="117.32000000000001" y1="134.07999999999998" x2="119.61548" y2="137.88063999999997" stroke="#ff30ff" stroke-width="0.7" />
<line x1="121.61333333333334" y1="131.48666666666668" x2="123.90881333333334" y2="135.28730666666667" stroke="#ff30ff" stroke-width="0.7" />
<line x1="125.90666666666667" y1="128.89333333333332" x2="128.20214666666666" y2="132.6939733333333" stroke="#ff30ff" stroke-width="0.7" />
<line x1="130.2" y1="126.3" x2="132.49548" y2="130.10064" stroke="#ff30ff" stroke-width="0.7" />
<line x1="134.49333333333334" y1="123.70666666666666" x2="136.78881333333334" y2="127.50730666666666" stroke="#ff30ff" stroke-width="0.7" />
<line x1="138.78666666666666" y1="121.11333333333333" x2="141.08214666666666" y2="124.91397333333333" stroke="#ff30ff" stroke-width="0.7" />
<line x1="143.07999999999998" y1="118.52000000000001" x2="145.37547999999998" y2="122.32064000000001" stroke="#ff30ff" stroke-width="0.7" />
<line x1="147.37333333333333" y1="115.92666666666668" x2="149.66881333333333" y2="119.72730666666668" stroke="#ff30ff" stroke-width="0.7" />
<line x1="151.66666666666669" y1="113.33333333333334" x2="153.96214666666668" y2="117.13397333333334" stroke="#ff30ff" stroke-width="0.7" />
<line x1="155.95999999999998" y1="110.74000000000001" x2="158.25547999999998" y2="114.54064000000001" stroke="#ff30ff" stroke-width="0.7" />
<line x1="160.25333333333333" y1="108.14666666666668" x2="162.54881333333333" y2="111.94730666666668" stroke="#ff30ff" stroke-width="0.7" />
<line x1="164.54666666666668" y1="105.55333333333333" x2="166.84214666666668" y2="109.35397333333333" stroke="#ff30ff" stroke-width="0.7" />
<line x1="168.84000000000003" y1="102.96000000000001" x2="171.13548000000003" y2="106.76064000000001" stroke="#ff30ff" stroke-width="0.7" />
<line x1="173.13333333333333" y1="100.36666666666666" x2="175.42881333333332" y2="104.16730666666666" stroke="#ff30ff" stroke-width="0.7" />
<line x1="177.42666666666668" y1="97.77333333333334" x2="179.72214666666667" y2="101.57397333333334" stroke="#ff30ff" stroke-width="0.7" />
<line x1="181.72000000000003" y1="95.18" x2="184.01548000000003" y2="98.98064000000001" stroke="#ff30ff" stroke-width="0.7" />
<line x1="186.01333333333335" y1="92.58666666666667" x2="188.30881333333335" y2="96.38730666666667" stroke="#ff30ff" stroke-width="0.7" />
<line x1="190.30666666666667" y1="89.99333333333334" x2="192.60214666666667" y2="93.79397333333334" stroke="#ff30ff" stroke-width="0.7" />
<line x1="194.60000000000002" y1="87.4" x2="196.89548000000002" y2="91.20064" stroke="#ff30ff" stroke-width="0.7" />
<line x1="47" y1="173.4" x2="64.5" y2="164.4" stroke="#ff30ff" stroke-width="0.7" />
<text transform="translate(110,128.4) rotate(-27.5) scale(1,1.18)" font-size="7.63" font-family="Liberation Mono" fill="#202020" textLength="35" lengthAdjust="spacing" stroke="#fff" stroke-width="0.06">C2 90X15</text>
<line x1="17" y1="234" x2="236.2" y2="234" stroke="#4848ff" stroke-width="1.0" />
<polygon points="15.600000000000001,234 17.3,231.62 19.0,234 17.3,236.38" fill="#4848ff" stroke="none" stroke-width="1" />
<polygon points="41.0,234 42.7,231.62 44.400000000000006,234 42.7,236.38" fill="#4848ff" stroke="none" stroke-width="1" />
<polygon points="59.8,234 61.5,231.62 63.2,234 61.5,236.38" fill="#4848ff" stroke="none" stroke-width="1" />
<polygon points="196.10000000000002,234 197.8,231.62 199.5,234 197.8,236.38" fill="#4848ff" stroke="none" stroke-width="1" />
<polygon points="208.70000000000002,234 210.4,231.62 212.1,234 210.4,236.38" fill="#4848ff" stroke="none" stroke-width="1" />
<polygon points="234.5,234 236.2,231.62 237.89999999999998,234 236.2,236.38" fill="#4848ff" stroke="none" stroke-width="1" />
<text transform="translate(23.7,244.4) scale(1,1.18)" font-size="8.22" font-family="Liberation Mono" fill="#202020" textLength="11.6" lengthAdjust="spacingAndGlyphs" stroke="#fff" stroke-width="0.12">50</text>
<text transform="translate(45.7,244.4) scale(1,1.18)" font-size="8.22" font-family="Liberation Mono" fill="#202020" textLength="11.6" lengthAdjust="spacingAndGlyphs" stroke="#fff" stroke-width="0.12">35</text>
<text transform="translate(120.7,244.4) scale(1,1.18)" font-size="9.5" font-family="Liberation Mono" fill="#202020" textLength="16.6" lengthAdjust="spacingAndGlyphs" stroke="#fff" stroke-width="0.12">264</text>
<text transform="translate(197.5,244.4) scale(1,1.18)" font-size="8.22" font-family="Liberation Mono" fill="#202020" textLength="11.3" lengthAdjust="spacingAndGlyphs" stroke="#fff" stroke-width="0.12">25</text>
<text transform="translate(216.7,244.4) scale(1,1.18)" font-size="8.22" font-family="Liberation Mono" fill="#202020" textLength="10.6" lengthAdjust="spacingAndGlyphs" stroke="#fff" stroke-width="0.12">50</text>
<line x1="42.7" y1="260" x2="210.4" y2="260" stroke="#4848ff" stroke-width="1.0" />
<polygon points="41.0,260 42.7,257.62 44.400000000000006,260 42.7,262.38" fill="#4848ff" stroke="none" stroke-width="1" />
<polygon points="63.3,260 65,257.62 66.7,260 65,262.38" fill="#4848ff" stroke="none" stroke-width="1" />
<polygon points="193.9,260 195.6,257.62 197.29999999999998,260 195.6,262.38" fill="#4848ff" stroke="none" stroke-width="1" />
<polygon points="208.70000000000002,260 210.4,257.62 212.1,260 210.4,262.38" fill="#4848ff" stroke="none" stroke-width="1" />
<text transform="translate(34.7,258) scale(1,1.18)" font-size="6.93" font-family="Liberation Mono" fill="#202020" textLength="37.6" lengthAdjust="spacing" stroke="#fff" stroke-width="0.12">Ø8/7 (A)</text>
<text transform="translate(110.7,258) scale(1,1.18)" font-size="7.19" font-family="Liberation Mono" fill="#202020" textLength="37.9" lengthAdjust="spacing" stroke="#fff" stroke-width="0.12">Ø8/7 (B)</text>
<text transform="translate(183.7,258) scale(1,1.18)" font-size="7.19" font-family="Liberation Mono" fill="#202020" textLength="36.6" lengthAdjust="spacing" stroke="#fff" stroke-width="0.12">Ø8/7 (B)</text>
<text transform="translate(47.7,268.5) scale(1,1.18)" font-size="8.35" font-family="Liberation Mono" fill="#202020" textLength="11.6" lengthAdjust="spacingAndGlyphs" stroke="#fff" stroke-width="0.12">43</text>
<text transform="translate(121.4,268.8) scale(1,1.18)" font-size="9.63" font-family="Liberation Mono" fill="#202020" textLength="15.9" lengthAdjust="spacingAndGlyphs" stroke="#fff" stroke-width="0.12">252</text>
<text transform="translate(196.7,268.5) scale(1,1.18)" font-size="8.35" font-family="Liberation Mono" fill="#202020" textLength="10.6" lengthAdjust="spacingAndGlyphs" stroke="#fff" stroke-width="0.12">29</text>
<line x1="17.6" y1="301" x2="17.6" y2="534" stroke="#ff6060" stroke-width="1" />
<line x1="42.5" y1="301" x2="42.5" y2="534" stroke="#ff6060" stroke-width="1" />
<line x1="65.4" y1="301" x2="65.4" y2="534" stroke="#ff6060" stroke-width="1" />
<line x1="195.4" y1="301" x2="195.4" y2="534" stroke="#ff6060" stroke-width="1" />
<line x1="210.4" y1="301" x2="210.4" y2="534" stroke="#ff6060" stroke-width="1" />
<line x1="236.3" y1="301" x2="236.3" y2="534" stroke="#ff6060" stroke-width="1" />
<polyline points="18.5,401 18.5,392.4 76,392.4 100,378" stroke="#1a8a1a" stroke-width="1.5" fill="none" />
<text transform="translate(7.7,389.5) scale(1,1.18)" font-size="8.86" font-family="Liberation Mono" fill="#202020" textLength="77.6" lengthAdjust="spacing" stroke="#fff" stroke-width="0.12">(1) 5Ø12 L=180</text>
<text transform="translate(86,394.3) rotate(-27.5) scale(1,1.18)" font-size="5.93" font-family="Liberation Mono" fill="#202020" textLength="9.5" lengthAdjust="spacingAndGlyphs" stroke="#fff" stroke-width="0.06">56</text>
<text transform="translate(16.2,402.5) rotate(-90) scale(1,1.18)" font-size="6.78" font-family="Liberation Mono" fill="#202020" textLength="10" lengthAdjust="spacingAndGlyphs" stroke="#fff" stroke-width="0.06">18</text>
<text transform="translate(39.7,403) scale(1,1.18)" font-size="7.7" font-family="Liberation Mono" fill="#202020" textLength="12.6" lengthAdjust="spacingAndGlyphs" stroke="#fff" stroke-width="0.12">108</text>
<polyline points="36,442.6 52.8,442.6 195.4,356 234.6,356 234.6,361" stroke="#1a8a1a" stroke-width="1.5" fill="none" />
<text transform="translate(88.5,412.5) rotate(-27) scale(1,1.18)" font-size="8.14" font-family="Liberation Mono" fill="#202020" textLength="72" lengthAdjust="spacing" stroke="#fff" stroke-width="0.06">(4) 4Ø12 L=440</text>
<text transform="translate(121,410.5) rotate(-27.5) scale(1,1.18)" font-size="6.78" font-family="Liberation Mono" fill="#202020" textLength="13.5" lengthAdjust="spacingAndGlyphs" stroke="#fff" stroke-width="0.06">325</text>
<text transform="translate(38.7,452.5) scale(1,1.18)" font-size="7.06" font-family="Liberation Mono" fill="#202020" textLength="8.6" lengthAdjust="spacingAndGlyphs" stroke="#fff" stroke-width="0.12">31</text>
<text transform="translate(208.7,364.5) scale(1,1.18)" font-size="7.06" font-family="Liberation Mono" fill="#202020" textLength="10.6" lengthAdjust="spacingAndGlyphs" stroke="#fff" stroke-width="0.12">75</text>
<text transform="translate(243.9,361.3) rotate(-90) scale(1,1.18)" font-size="6.61" font-family="Liberation Mono" fill="#202020" textLength="4.4" lengthAdjust="spacingAndGlyphs" stroke="#fff" stroke-width="0.06">9</text>
<polyline points="12,461.1 65.4,461.1 65.4,456.5 195.4,379 241,379" stroke="#4848ff" stroke-width="1" fill="none" />
<text transform="translate(173.3,389.5) scale(1,1.18)" font-size="8.35" font-family="Liberation Mono" fill="#202020" textLength="75.6" lengthAdjust="spacing" stroke="#fff" stroke-width="0.12">(2) 4Ø14 L=170</text>
<polyline points="157,416 188.6,397 234.6,397 234.6,391.5" stroke="#1a8a1a" stroke-width="1.5" fill="none" />
<text transform="translate(205.7,406.5) scale(1,1.18)" font-size="7.06" font-family="Liberation Mono" fill="#202020" textLength="10.6" lengthAdjust="spacingAndGlyphs" stroke="#fff" stroke-width="0.12">98</text>
<text transform="translate(243.9,398) rotate(-90) scale(1,1.18)" font-size="6.61" font-family="Liberation Mono" fill="#202020" textLength="4.4" lengthAdjust="spacingAndGlyphs" stroke="#fff" stroke-width="0.06">9</text>
<text transform="translate(170,416.5) rotate(-27.5) scale(1,1.18)" font-size="6.36" font-family="Liberation Mono" fill="#202020" textLength="9" lengthAdjust="spacingAndGlyphs" stroke="#fff" stroke-width="0.06">71</text>
<polyline points="18.5,491.8 18.5,500 61.5,500 206,413.5 229.3,413.5" stroke="#1a8a1a" stroke-width="1.5" fill="none" />
<text transform="translate(211.7,423.5) scale(1,1.18)" font-size="7.06" font-family="Liberation Mono" fill="#202020" textLength="9.6" lengthAdjust="spacingAndGlyphs" stroke="#fff" stroke-width="0.12">47</text>
<text transform="translate(98.5,471) rotate(-28) scale(1,1.18)" font-size="8.14" font-family="Liberation Mono" fill="#202020" textLength="71" lengthAdjust="spacing" stroke="#fff" stroke-width="0.06">(3) 6Ø14 L=470</text>
<text transform="translate(130.7,467.5) rotate(-28) scale(1,1.18)" font-size="6.78" font-family="Liberation Mono" fill="#202020" textLength="13.5" lengthAdjust="spacingAndGlyphs" stroke="#fff" stroke-width="0.06">325</text>
<text transform="translate(16.2,501.5) rotate(-90) scale(1,1.18)" font-size="6.78" font-family="Liberation Mono" fill="#202020" textLength="10" lengthAdjust="spacingAndGlyphs" stroke="#fff" stroke-width="0.06">16</text>
<text transform="translate(34.7,509) scale(1,1.18)" font-size="7.7" font-family="Liberation Mono" fill="#202020" textLength="8.6" lengthAdjust="spacingAndGlyphs" stroke="#fff" stroke-width="0.12">82</text>
<text x="44" y="507.5" font-size="4.5" fill="#202020" font-family="Liberation Mono" textLength="16" lengthAdjust="spacingAndGlyphs" >&lt;35&gt;</text>
<text transform="translate(279.7,148.7) scale(1,1.18)" font-size="7.7" font-family="Liberation Mono" fill="#202020" textLength="59.0" lengthAdjust="spacing" stroke="#fff" stroke-width="0.12">SEZIONE (A)</text>
<text transform="translate(321.6,161) scale(1,1.18)" font-size="6.93" font-family="Liberation Mono" fill="#202020" textLength="10.2" lengthAdjust="spacingAndGlyphs" stroke="#fff" stroke-width="0.12">90</text>
<rect x="280.5" y="163.5" width="93" height="23" fill="none" stroke="#707070" stroke-width="1" />
<rect x="282.3" y="165.4" width="89.4" height="19.2" fill="none" stroke="#30a030" stroke-width="0.9" />
<text transform="translate(278.2,180.5) rotate(-90) scale(1,1.18)" font-size="7.2" font-family="Liberation Mono" fill="#202020" textLength="9.5" lengthAdjust="spacingAndGlyphs" stroke="#fff" stroke-width="0.06">22</text>
<text transform="translate(279.7,211.8) scale(1,1.18)" font-size="8.35" font-family="Liberation Mono" fill="#202020" textLength="48.2" lengthAdjust="spacing" stroke="#fff" stroke-width="0.12">8Ø8 L=102</text>
<polyline points="282.2,223.3 282.2,214.7 371.5,214.7 371.5,223.3" stroke="#1a8a1a" stroke-width="1.4" fill="none" />
<text transform="translate(321.3,224) scale(1,1.18)" font-size="7.58" font-family="Liberation Mono" fill="#202020" textLength="10.0" lengthAdjust="spacingAndGlyphs" stroke="#fff" stroke-width="0.12">86</text>
<text transform="translate(279.7,241.6) scale(1,1.18)" font-size="8.09" font-family="Liberation Mono" fill="#202020" textLength="48.6" lengthAdjust="spacing" stroke="#fff" stroke-width="0.12">8Ø8 L=138</text>
<polyline points="290.7,244.7 282.2,244.7 282.2,263.2 371.5,263.2 371.5,244.7 362.7,244.7" stroke="#1a8a1a" stroke-width="1.4" fill="none" />
<text transform="translate(380.6,258.8) rotate(-90) scale(1,1.18)" font-size="6.61" font-family="Liberation Mono" fill="#202020" textLength="8.8" lengthAdjust="spacingAndGlyphs" stroke="#fff" stroke-width="0.06">18</text>
<text transform="translate(416.5,148.7) scale(1,1.18)" font-size="7.7" font-family="Liberation Mono" fill="#202020" textLength="59.2" lengthAdjust="spacing" stroke="#fff" stroke-width="0.12">SEZIONE (B)</text>
<text transform="translate(458.7,161) scale(1,1.18)" font-size="6.93" font-family="Liberation Mono" fill="#202020" textLength="9.3" lengthAdjust="spacingAndGlyphs" stroke="#fff" stroke-width="0.12">90</text>
<rect x="417" y="163.5" width="93.5" height="15" fill="none" stroke="#707070" stroke-width="1" />
<rect x="419" y="165.4" width="89.5" height="11.2" fill="none" stroke="#30a030" stroke-width="0.9" />
<text transform="translate(414.6,177.5) rotate(-90) scale(1,1.18)" font-size="6.78" font-family="Liberation Mono" fill="#202020" textLength="9.5" lengthAdjust="spacingAndGlyphs" stroke="#fff" stroke-width="0.06">15</text>
<text transform="translate(416.7,204.6) scale(1,1.18)" font-size="8.86" font-family="Liberation Mono" fill="#202020" textLength="53.6" lengthAdjust="spacing" stroke="#fff" stroke-width="0.12">43Ø8 L=102</text>
<polyline points="418.5,215.7 418.5,207.5 508,207.5 508,215.7" stroke="#1a8a1a" stroke-width="1.4" fill="none" />
<text transform="translate(458.7,216.6) scale(1,1.18)" font-size="6.68" font-family="Liberation Mono" fill="#202020" textLength="8.6" lengthAdjust="spacingAndGlyphs" stroke="#fff" stroke-width="0.12">86</text>
<text transform="translate(416.7,234.9) scale(1,1.18)" font-size="9.24" font-family="Liberation Mono" fill="#202020" textLength="53.6" lengthAdjust="spacing" stroke="#fff" stroke-width="0.12">43Ø8 L=124</text>
<polyline points="427.8,237.1 418.5,237.1 418.5,248.3 508,248.3 508,237.1 499.8,237.1" stroke="#1a8a1a" stroke-width="1.4" fill="none" />
<text transform="translate(516.3,248.5) rotate(-90) scale(1,1.18)" font-size="6.36" font-family="Liberation Mono" fill="#202020" textLength="8.5" lengthAdjust="spacingAndGlyphs" stroke="#fff" stroke-width="0.06">11</text>
<text transform="translate(458.7,257.7) scale(1,1.18)" font-size="7.7" font-family="Liberation Mono" fill="#202020" textLength="8.6" lengthAdjust="spacingAndGlyphs" stroke="#fff" stroke-width="0.12">86</text>
<line x1="280.2" y1="289.2" x2="316" y2="289.2" stroke="#f8b850" stroke-width="1" />
<line x1="280.2" y1="299.8" x2="316" y2="299.8" stroke="#f8b850" stroke-width="1" />
<line x1="280.2" y1="310.3" x2="316" y2="310.3" stroke="#f8b850" stroke-width="1" />
<line x1="280.2" y1="330.9" x2="316" y2="330.9" stroke="#f8b850" stroke-width="1" />
<line x1="280.2" y1="341.6" x2="316" y2="341.6" stroke="#f8b850" stroke-width="1" />
<line x1="280.2" y1="344.2" x2="316" y2="344.2" stroke="#f8b850" stroke-width="1" />
<line x1="280.2" y1="364.8" x2="316" y2="364.8" stroke="#f8b850" stroke-width="1" />
<line x1="280.2" y1="289.2" x2="280.2" y2="341.6" stroke="#f8b850" stroke-width="1" />
<line x1="280.2" y1="344.2" x2="280.2" y2="364.8" stroke="#f8b850" stroke-width="1" />
<line x1="312.8" y1="289.2" x2="312.8" y2="341.6" stroke="#f8b850" stroke-width="1" />
<text transform="translate(281.7,308) scale(1,1.18)" font-size="7.7" font-family="Liberation Mono" fill="#202020" textLength="27.6" lengthAdjust="spacing" stroke="#fff" stroke-width="0.12">STAFFE</text>
<text transform="translate(281.7,319) scale(1,1.18)" font-size="7.7" font-family="Liberation Mono" fill="#202020" textLength="21.6" lengthAdjust="spacing" stroke="#fff" stroke-width="0.12">LONG.</text>
<text transform="translate(281.7,340) scale(1,1.18)" font-size="7.7" font-family="Liberation Mono" fill="#202020" textLength="27.6" lengthAdjust="spacing" stroke="#fff" stroke-width="0.12">TOTALE</text>
<text transform="translate(281.7,354) scale(1,1.18)" font-size="7.7" font-family="Liberation Mono" fill="#202020" textLength="18.6" lengthAdjust="spacing" stroke="#fff" stroke-width="0.12">CLS:</text>
<rect x="520.5" y="39" width="178" height="2.5" fill="#f8f8f8" />
<rect x="521" y="41.3" width="177.3" height="51.2" fill="#e6fce6" />
<line x1="521" y1="41.3" x2="698.3" y2="41.3" stroke="#b8b8b8" stroke-width="1" />
<line x1="521" y1="92.5" x2="698.3" y2="92.5" stroke="#c8c8c8" stroke-width="1" />
<line x1="521" y1="41.3" x2="521" y2="92.5" stroke="#b0b0b0" stroke-width="1.2" />
<line x1="697.8" y1="41.3" x2="697.8" y2="92.5" stroke="#c0c0c0" stroke-width="1" />
<line x1="523" y1="46.3" x2="526" y2="46.3" stroke="#a8b0a8" stroke-width="0.8" />
<line x1="572" y1="46.3" x2="696" y2="46.3" stroke="#c0c8c0" stroke-width="0.8" />
<text x="526.7" y="48.599999999999994" font-size="6.09" fill="#1010f0" font-weight="bold" textLength="43.6" lengthAdjust="spacingAndGlyphs" stroke="#1010f0" stroke-width="0.12">DATI TRAVATA</text>
<rect x="525.4" y="51.9" width="5.6" height="5.6" fill="#ffffff" stroke="#808080" stroke-width="0.8" />
<polyline points="526.3,54.3 527.5,55.8 529.9,53.0" stroke="#000" stroke-width="1.1" fill="none" />
<text x="534.7" y="57" font-size="6.52" fill="#202020" textLength="72.6" lengthAdjust="spacingAndGlyphs" stroke="#202020" stroke-width="0.12">STRUTTURA DISSIPATIVA</text>
<text x="612.7" y="57" font-size="6.52" fill="#202020" textLength="31.6" lengthAdjust="spacingAndGlyphs" stroke="#202020" stroke-width="0.12">N.RO ASTE</text>
<text x="648.7" y="57" font-size="6.52" fill="#202020" textLength="4.1" lengthAdjust="spacingAndGlyphs" stroke="#202020" stroke-width="0.12">3</text>
<text x="660.7" y="57" font-size="6.52" fill="#202020" textLength="6.6" lengthAdjust="spacingAndGlyphs" stroke="#202020" stroke-width="0.12">ID:</text>
<rect x="671" y="50.5" width="25" height="9.5" fill="#eaeaea" />
<line x1="671" y1="50.8" x2="696" y2="50.8" stroke="#808080" stroke-width="0.8" />
<line x1="671.3" y1="50.5" x2="671.3" y2="60" stroke="#808080" stroke-width="0.8" />
<text x="672.2" y="57" font-size="6.52" fill="#202020" textLength="3.1" lengthAdjust="spacingAndGlyphs" stroke="#202020" stroke-width="0.12">-1</text>
<circle cx="530.5" cy="69.5" r="2.7" fill="#ffffff" stroke="#a0a0a0" stroke-width="0.7"/>
<text x="536.7" y="72" font-size="6.52" fill="#202020" textLength="49.6" lengthAdjust="spacingAndGlyphs" stroke="#202020" stroke-width="0.12">ALTA DUTTILITA'</text>
<circle cx="530.5" cy="77.5" r="2.7" fill="#ffffff" stroke="#a0a0a0" stroke-width="0.7"/>
<circle cx="530.5" cy="77.5" r="1.1" fill="#000" stroke="none" stroke-width="1"/>
<text x="536.7" y="80" font-size="6.52" fill="#202020" textLength="52.6" lengthAdjust="spacingAndGlyphs" stroke="#202020" stroke-width="0.12">BASSA DUTTILITA'</text>
<circle cx="530.5" cy="85.5" r="2.7" fill="#ffffff" stroke="#a0a0a0" stroke-width="0.7"/>
<text x="536.7" y="88" font-size="6.52" fill="#202020" textLength="53.6" lengthAdjust="spacingAndGlyphs" stroke="#202020" stroke-width="0.12">CALCOLO SEMPLIF.</text>
<circle cx="616.5" cy="69.5" r="2.7" fill="#ffffff" stroke="#a0a0a0" stroke-width="0.7"/>
<circle cx="616.5" cy="69.5" r="1.1" fill="#000" stroke="none" stroke-width="1"/>
<text x="622.7" y="72" font-size="6.52" fill="#202020" textLength="19.6" lengthAdjust="spacingAndGlyphs" stroke="#202020" stroke-width="0.12">TRAVE</text>
<circle cx="616.5" cy="77.5" r="2.7" fill="#ffffff" stroke="#a0a0a0" stroke-width="0.7"/>
<text x="622.7" y="80" font-size="6.52" fill="#202020" textLength="60.6" lengthAdjust="spacingAndGlyphs" stroke="#202020" stroke-width="0.12">TRAVETTO DI SOLAIO</text>
<circle cx="616.5" cy="85.5" r="2.7" fill="#ffffff" stroke="#a0a0a0" stroke-width="0.7"/>
<text x="622.7" y="88" font-size="6.52" fill="#202020" textLength="65.6" lengthAdjust="spacingAndGlyphs" stroke="#202020" stroke-width="0.12">TRAVE DI FONDAZIONE</text>
<rect x="521" y="93" width="177.3" height="26.299999999999997" fill="#fffcd2" />
<line x1="521" y1="93" x2="698.3" y2="93" stroke="#b8b8b8" stroke-width="1" />
<line x1="521" y1="119.3" x2="698.3" y2="119.3" stroke="#c8c8c8" stroke-width="1" />
<line x1="521" y1="93" x2="521" y2="119.3" stroke="#b0b0b0" stroke-width="1.2" />
<line x1="697.8" y1="93" x2="697.8" y2="119.3" stroke="#c0c0c0" stroke-width="1" />
<line x1="523" y1="98" x2="526" y2="98" stroke="#a8b0a8" stroke-width="0.8" />
<line x1="579.5" y1="98" x2="696" y2="98" stroke="#c0c8c0" stroke-width="0.8" />
<text x="526.7" y="100.3" font-size="6.09" fill="#1010f0" font-weight="bold" textLength="51.1" lengthAdjust="spacingAndGlyphs" stroke="#1010f0" stroke-width="0.12">TIPO DI VERIFICA</text>
<circle cx="530.5" cy="105.5" r="2.7" fill="#ffffff" stroke="#a0a0a0" stroke-width="0.7"/>
<circle cx="530.5" cy="105.5" r="1.1" fill="#000" stroke="none" stroke-width="1"/>
<text x="536.7" y="108" font-size="6.52" fill="#202020" textLength="34.6" lengthAdjust="spacingAndGlyphs" stroke="#202020" stroke-width="0.12">SLU (NTC18)</text>
<circle cx="592.5" cy="105.5" r="2.7" fill="#ffffff" stroke="#a0a0a0" stroke-width="0.7"/>
<text x="598.7" y="108" font-size="6.52" fill="#202020" textLength="62.6" lengthAdjust="spacingAndGlyphs" stroke="#202020" stroke-width="0.12">TENSIONI AMMISSIBILI</text>
<rect x="590.4" y="110.4" width="5.6" height="5.6" fill="#ffffff" stroke="#808080" stroke-width="0.8" />
<polyline points="591.3,112.8 592.5,114.3 594.9,111.5" stroke="#000" stroke-width="1.1" fill="none" />
<text x="599.7" y="116" font-size="6.52" fill="#202020" textLength="53.6" lengthAdjust="spacingAndGlyphs" stroke="#202020" stroke-width="0.12">MOM. RASTREMATI</text>
<rect x="521" y="119.8" width="177.3" height="29.500000000000014" fill="#b9f7b9" />
<line x1="521" y1="119.8" x2="698.3" y2="119.8" stroke="#b8b8b8" stroke-width="1" />
<line x1="521" y1="149.3" x2="698.3" y2="149.3" stroke="#c8c8c8" stroke-width="1" />
<line x1="521" y1="119.8" x2="521" y2="149.3" stroke="#b0b0b0" stroke-width="1.2" />
<line x1="697.8" y1="119.8" x2="697.8" y2="149.3" stroke="#c0c0c0" stroke-width="1" />
<line x1="523" y1="124.8" x2="526" y2="124.8" stroke="#a8b0a8" stroke-width="0.8" />
<line x1="595.5" y1="124.8" x2="696" y2="124.8" stroke="#c0c8c0" stroke-width="0.8" />
<text x="526.7" y="127.1" font-size="6.09" fill="#1010f0" font-weight="bold" textLength="67.1" lengthAdjust="spacingAndGlyphs" stroke="#1010f0" stroke-width="0.12">CALCOLO E PROGETTO</text>
<rect x="525" y="127.5" width="17.5" height="8.5" fill="#e8e8e8" />
<line x1="525" y1="127.7" x2="542.5" y2="127.7" stroke="#ffffff" stroke-width="0.8" />
<line x1="525" y1="135.8" x2="542.5" y2="135.8" stroke="#909090" stroke-width="0.8" />
<line x1="542.3" y1="127.5" x2="542.3" y2="136" stroke="#909090" stroke-width="0.8" />
<text x="528.7" y="134" font-size="5.22" fill="#202020" textLength="9.6" lengthAdjust="spacingAndGlyphs" stroke="#202020" stroke-width="0.12">ferr</text>
<text x="543.7" y="134.5" font-size="6.52" fill="#202020" textLength="73.6" lengthAdjust="spacingAndGlyphs" stroke="#202020" stroke-width="0.12">CALCOLA SOLLECITAZIONI</text>
<rect x="526.4" y="139.4" width="5.6" height="5.6" fill="#ffffff" stroke="#808080" stroke-width="0.8" />
<text x="535.7" y="145" font-size="6.52" fill="#202020" textLength="119.6" lengthAdjust="spacingAndGlyphs" stroke="#202020" stroke-width="0.12">FERR.LONG. : RIPRISTINA CON PROGETTO</text>
<rect x="521" y="150.3" width="177.3" height="20.299999999999983" fill="#efefef" />
<line x1="521" y1="150.3" x2="698.3" y2="150.3" stroke="#b8b8b8" stroke-width="1" />
<line x1="521" y1="170.6" x2="698.3" y2="170.6" stroke="#c8c8c8" stroke-width="1" />
<line x1="521" y1="150.3" x2="521" y2="170.6" stroke="#b0b0b0" stroke-width="1.2" />
<line x1="697.8" y1="150.3" x2="697.8" y2="170.6" stroke="#c0c0c0" stroke-width="1" />
<line x1="523" y1="155.3" x2="526" y2="155.3" stroke="#a8b0a8" stroke-width="0.8" />
<line x1="557.5" y1="155.3" x2="696" y2="155.3" stroke="#c0c8c0" stroke-width="0.8" />
<text x="526.7" y="157.60000000000002" font-size="6.09" fill="#1010f0" font-weight="bold" textLength="29.1" lengthAdjust="spacingAndGlyphs" stroke="#1010f0" stroke-width="0.12">PANNELLI</text>
<rect x="529.4" y="160.4" width="5.6" height="5.6" fill="#ffffff" stroke="#808080" stroke-width="0.8" />
<polyline points="530.3,162.8 531.5,164.3 533.9,161.5" stroke="#000" stroke-width="1.1" fill="none" />
<text x="537.7" y="166" font-size="6.52" fill="#202020" textLength="22.6" lengthAdjust="spacingAndGlyphs" stroke="#202020" stroke-width="0.12">DIAGR.1</text>
<rect x="567.4" y="160.4" width="5.6" height="5.6" fill="#ffffff" stroke="#808080" stroke-width="0.8" />
<text x="575.7" y="166" font-size="6.52" fill="#202020" textLength="23.6" lengthAdjust="spacingAndGlyphs" stroke="#202020" stroke-width="0.12">DIAGR.2</text>
<rect x="659.5" y="156.5" width="10.5" height="11" fill="#e4e4e4" stroke="#403838" stroke-width="1.1" />
<rect x="661" y="158" width="7.5" height="8" fill="#f4f4f4" />
<polygon points="668,158.5 668,166 661.5,166" fill="#282828" stroke="none" stroke-width="1" />
<rect x="672" y="156" width="11.5" height="12" fill="#f4f4f4" />
<line x1="672" y1="167.5" x2="683.5" y2="167.5" stroke="#a0a0a0" stroke-width="1" />
<line x1="683.2" y1="156" x2="683.2" y2="168" stroke="#a0a0a0" stroke-width="1" />
<rect x="673.5" y="159" width="8.5" height="6.8" fill="#404858" />
<rect x="674.5" y="158" width="3.5" height="1.5" fill="#505868" />
<circle cx="678" cy="162.5" r="2.4" fill="#8890d0" stroke="#c0c8f0" stroke-width="0.6"/>
<circle cx="678" cy="162.5" r="1" fill="#6070b0" stroke="none" stroke-width="1"/>
<rect x="685" y="156" width="11.5" height="12" fill="#f4f4f4" />
<line x1="685" y1="167.5" x2="696.5" y2="167.5" stroke="#a0a0a0" stroke-width="1" />
<line x1="696.2" y1="156" x2="696.2" y2="168" stroke="#a0a0a0" stroke-width="1" />
<rect x="686" y="158" width="9.5" height="8" fill="#ffffff" stroke="#b8d8b8" stroke-width="0.6" />
<polyline points="686.5,162.5 688.5,161.5 690.5,162.8 692.5,161.8 695,163.5" stroke="#e02040" stroke-width="0.9" fill="none" />
<circle cx="692.5" cy="159.3" r="0.9" fill="#f0c020" stroke="none" stroke-width="1"/>
<rect x="521" y="171" width="177.3" height="67.6" fill="#ffe0c2" />
<line x1="521" y1="171" x2="698.3" y2="171" stroke="#b8b8b8" stroke-width="1" />
<line x1="521" y1="238.6" x2="698.3" y2="238.6" stroke="#c8c8c8" stroke-width="1" />
<line x1="521" y1="171" x2="521" y2="238.6" stroke="#b0b0b0" stroke-width="1.2" />
<line x1="697.8" y1="171" x2="697.8" y2="238.6" stroke="#c0c0c0" stroke-width="1" />
<line x1="523" y1="176" x2="526" y2="176" stroke="#a8b0a8" stroke-width="0.8" />
<line x1="611.5" y1="176" x2="696" y2="176" stroke="#c0c8c0" stroke-width="0.8" />
<text x="526.7" y="178.3" font-size="6.09" fill="#1010f0" font-weight="bold" textLength="83.1" lengthAdjust="spacingAndGlyphs" stroke="#1010f0" stroke-width="0.12">DIAGRAMMI I - STATI LIMITE</text>
<rect x="526.4" y="183.4" width="5.6" height="5.6" fill="#ffffff" stroke="#808080" stroke-width="0.8" />
<polyline points="527.3,185.8 528.5,187.3 530.9,184.5" stroke="#000" stroke-width="1.1" fill="none" />
<text x="535.7" y="189" font-size="6.52" fill="#202020" textLength="27.6" lengthAdjust="spacingAndGlyphs" stroke="#202020" stroke-width="0.12">MOMENTI</text>
<line x1="536" y1="190.3" x2="563" y2="190.3" stroke="#202020" stroke-width="0.6" />
<rect x="589.4" y="183.4" width="5.6" height="5.6" fill="#ffffff" stroke="#808080" stroke-width="0.8" />
<polyline points="590.3,185.8 591.5,187.3 593.9,184.5" stroke="#000" stroke-width="1.1" fill="none" />
<text x="598.7" y="189" font-size="6.52" fill="#202020" textLength="16.6" lengthAdjust="spacingAndGlyphs" stroke="#202020" stroke-width="0.12">TAGLI</text>
<line x1="599" y1="190.3" x2="615" y2="190.3" stroke="#202020" stroke-width="0.6" />
<rect x="652.4" y="183.4" width="5.6" height="5.6" fill="#ffffff" stroke="#808080" stroke-width="0.8" />
<text x="661.7" y="189" font-size="6.52" fill="#202020" textLength="26.6" lengthAdjust="spacingAndGlyphs" stroke="#202020" stroke-width="0.12">TENSIONI</text>
<line x1="662" y1="190.3" x2="688" y2="190.3" stroke="#202020" stroke-width="0.6" />
<rect x="528.4" y="192.4" width="5.6" height="5.6" fill="#ffffff" stroke="#808080" stroke-width="0.8" />
<polyline points="529.3,194.8 530.5,196.3 532.9,193.5" stroke="#000" stroke-width="1.1" fill="none" />
<text x="537.7" y="198" font-size="6.52" fill="#202020" textLength="10.5" lengthAdjust="spacingAndGlyphs" stroke="#202020" stroke-width="0.12">Mxd</text>
<rect x="528.4" y="201.4" width="5.6" height="5.6" fill="#ffffff" stroke="#808080" stroke-width="0.8" />
<polyline points="529.3,203.8 530.5,205.3 532.9,202.5" stroke="#000" stroke-width="1.1" fill="none" />
<text x="537.7" y="207" font-size="6.52" fill="#202020" textLength="10.5" lengthAdjust="spacingAndGlyphs" stroke="#202020" stroke-width="0.12">Msd</text>
<rect x="528.4" y="211.4" width="5.6" height="5.6" fill="#ffffff" stroke="#808080" stroke-width="0.8" />
<text x="537.7" y="217" font-size="6.52" fill="#202020" textLength="17.1" lengthAdjust="spacingAndGlyphs" stroke="#202020" stroke-width="0.12">TESTI</text>
<rect x="528.4" y="219.4" width="5.6" height="5.6" fill="#ffffff" stroke="#808080" stroke-width="0.8" />
<text x="537.7" y="225" font-size="6.52" fill="#202020" textLength="28.6" lengthAdjust="spacingAndGlyphs" stroke="#202020" stroke-width="0.12">M.GERAR.</text>
<rect x="591.4" y="192.4" width="5.6" height="5.6" fill="#ffffff" stroke="#808080" stroke-width="0.8" />
<text x="600.7" y="198" font-size="6.52" fill="#202020" textLength="13.6" lengthAdjust="spacingAndGlyphs" stroke="#202020" stroke-width="0.12">VRd</text>
<rect x="591.4" y="201.4" width="5.6" height="5.6" fill="#ffffff" stroke="#808080" stroke-width="0.8" />
<text x="600.7" y="207" font-size="6.52" fill="#202020" textLength="17.6" lengthAdjust="spacingAndGlyphs" stroke="#202020" stroke-width="0.12">VRcd</text>
<rect x="591.4" y="211.4" width="5.6" height="5.6" fill="#ffffff" stroke="#808080" stroke-width="0.8" />
<polyline points="592.3,213.8 593.5,215.3 595.9,212.5" stroke="#000" stroke-width="1.1" fill="none" />
<text x="600.7" y="217" font-size="6.52" fill="#202020" textLength="12.6" lengthAdjust="spacingAndGlyphs" stroke="#202020" stroke-width="0.12">Vsd</text>
<rect x="591.4" y="219.4" width="5.6" height="5.6" fill="#ffffff" stroke="#808080" stroke-width="0.8" />
<polyline points="592.3,221.8 593.5,223.3 595.9,220.5" stroke="#000" stroke-width="1.1" fill="none" />
<text x="600.7" y="225" font-size="6.52" fill="#202020" textLength="17.6" lengthAdjust="spacingAndGlyphs" stroke="#202020" stroke-width="0.12">VRsd</text>
<rect x="591.4" y="227.4" width="5.6" height="5.6" fill="#ffffff" stroke="#808080" stroke-width="0.8" />
<text x="600.7" y="233" font-size="6.52" fill="#202020" textLength="17.6" lengthAdjust="spacingAndGlyphs" stroke="#202020" stroke-width="0.12">TESTI</text>
<rect x="654.4" y="192.4" width="5.6" height="5.6" fill="#f0f0f0" stroke="#c0c0c0" stroke-width="0.8" />
<polyline points="655.3,194.8 656.5,196.3 658.9,193.5" stroke="#a0a0a0" stroke-width="1.1" fill="none" />
<text x="663.7" y="198" font-size="6.52" fill="#b8b8b8" textLength="22.6" lengthAdjust="spacingAndGlyphs" stroke="#b8b8b8" stroke-width="0.12">ACCIAIO</text>
<rect x="654.4" y="201.4" width="5.6" height="5.6" fill="#f0f0f0" stroke="#c0c0c0" stroke-width="0.8" />
<polyline points="655.3,203.8 656.5,205.3 658.9,202.5" stroke="#a0a0a0" stroke-width="1.1" fill="none" />
<text x="663.7" y="207" font-size="6.52" fill="#b8b8b8" textLength="11.6" lengthAdjust="spacingAndGlyphs" stroke="#b8b8b8" stroke-width="0.12">CLS</text>
<rect x="654.4" y="211.4" width="5.6" height="5.6" fill="#f0f0f0" stroke="#c0c0c0" stroke-width="0.8" />
<polyline points="655.3,213.8 656.5,215.3 658.9,212.5" stroke="#a0a0a0" stroke-width="1.1" fill="none" />
<text x="663.7" y="217" font-size="6.52" fill="#b8b8b8" textLength="16.6" lengthAdjust="spacingAndGlyphs" stroke="#b8b8b8" stroke-width="0.12">TESTI</text>
<rect x="654.4" y="219.4" width="5.6" height="5.6" fill="#f0f0f0" stroke="#c0c0c0" stroke-width="0.8" />
<polyline points="655.3,221.8 656.5,223.3 658.9,220.5" stroke="#a0a0a0" stroke-width="1.1" fill="none" />
<text x="663.7" y="225" font-size="6.52" fill="#b8b8b8" textLength="23.6" lengthAdjust="spacingAndGlyphs" stroke="#b8b8b8" stroke-width="0.12">SPUNTA</text>
<rect x="315" y="264" width="380" height="267.5" fill="#f0f0f0" />
<rect x="315" y="264" width="380" height="14" fill="#ffffff" />
<line x1="315" y1="264.3" x2="695" y2="264.3" stroke="#a8b4bc" stroke-width="0.8" />
<line x1="315.3" y1="264" x2="315.3" y2="531.5" stroke="#b8c0c8" stroke-width="1" />
<line x1="694.7" y1="264" x2="694.7" y2="531.5" stroke="#b8c0c8" stroke-width="1" />
<line x1="315" y1="531.2" x2="695" y2="531.2" stroke="#b8c0c8" stroke-width="1" />
<rect x="319.5" y="268" width="6" height="4.5" fill="none" stroke="#305060" stroke-width="0.9" />
<rect x="319.5" y="268" width="6" height="1.6" fill="#208080" />
<line x1="323" y1="273.5" x2="326" y2="271" stroke="#404040" stroke-width="0.8" />
<text x="328.4" y="273.4" font-size="7.39" fill="#000" textLength="51.9" lengthAdjust="spacingAndGlyphs" stroke="#000" stroke-width="0.12">PROGETTO SCALA</text>
<line x1="684" y1="268" x2="690" y2="274" stroke="#333" stroke-width="0.9" />
<line x1="690" y1="268" x2="684" y2="274" stroke="#333" stroke-width="0.9" />
<rect x="321" y="283.2" width="367.3" height="152" fill="#ffffff" />
<line x1="321" y1="283.5" x2="688.3" y2="283.5" stroke="#a0a0a0" stroke-width="1" />
<line x1="321.5" y1="283.2" x2="321.5" y2="435.2" stroke="#a0a0a0" stroke-width="1" />
<line x1="321" y1="435" x2="688.3" y2="435" stroke="#e8e8e8" stroke-width="1" />
<line x1="688" y1="283.2" x2="688" y2="435.2" stroke="#d0d0d0" stroke-width="1" />
<rect x="323.2" y="285.7" width="45" height="11.5" fill="#ffffff" />
<line x1="323.2" y1="286" x2="368.1" y2="286" stroke="#909090" stroke-width="0.9" />
<line x1="323.5" y1="285.7" x2="323.5" y2="297.2" stroke="#909090" stroke-width="0.9" />
<line x1="323.2" y1="297" x2="368.1" y2="297" stroke="#e0e0e0" stroke-width="0.8" />
<line x1="368" y1="285.7" x2="368" y2="297.2" stroke="#e0e0e0" stroke-width="0.8" />
<text x="328.7" y="293.8" font-size="7.97" fill="#202020" textLength="33.6" lengthAdjust="spacingAndGlyphs" stroke="#202020" stroke-width="0.12">Rampa scala</text>
<line x1="375" y1="296.5" x2="630" y2="296.5" stroke="#a01818" stroke-width="0.9" />
<line x1="375" y1="293" x2="375" y2="308" stroke="#a01818" stroke-width="0.9" />
<circle cx="375" cy="296.5" r="1.6" fill="#901010" stroke="none" stroke-width="1"/>
<circle cx="436.5" cy="296.5" r="1.6" fill="#901010" stroke="none" stroke-width="1"/>
<circle cx="570.7" cy="296.5" r="1.6" fill="#901010" stroke="none" stroke-width="1"/>
<circle cx="630" cy="296.5" r="1.6" fill="#901010" stroke="none" stroke-width="1"/>
<line x1="630" y1="296.5" x2="630" y2="333" stroke="#d07070" stroke-width="0.9" stroke-dasharray="4,2"/>
<line x1="570.7" y1="296.5" x2="570.7" y2="333" stroke="#d07070" stroke-width="0.9" stroke-dasharray="4,2"/>
<rect x="387.3" y="290" width="26.30000000000001" height="9.399999999999977" fill="#e8e8e8" />
<line x1="387.3" y1="290.4" x2="413.6" y2="290.4" stroke="#707070" stroke-width="0.8" />
<line x1="387.7" y1="290" x2="387.7" y2="299.4" stroke="#707070" stroke-width="0.8" />
<line x1="387.3" y1="299.0" x2="413.6" y2="299.0" stroke="#e4e4e4" stroke-width="0.8" />
<line x1="413.20000000000005" y1="290" x2="413.20000000000005" y2="299.4" stroke="#e4e4e4" stroke-width="0.8" />
<text x="393.4" y="297.0" font-size="6.67" fill="#202020" textLength="14.1" lengthAdjust="spacingAndGlyphs" stroke="#202020" stroke-width="0.12">92.98</text>
<rect x="488.6" y="289.1" width="25.899999999999977" height="9.5" fill="#e8e8e8" />
<line x1="488.6" y1="289.5" x2="514.5" y2="289.5" stroke="#707070" stroke-width="0.8" />
<line x1="489.0" y1="289.1" x2="489.0" y2="298.6" stroke="#707070" stroke-width="0.8" />
<line x1="488.6" y1="298.20000000000005" x2="514.5" y2="298.20000000000005" stroke="#e4e4e4" stroke-width="0.8" />
<line x1="514.1" y1="289.1" x2="514.1" y2="298.6" stroke="#e4e4e4" stroke-width="0.8" />
<text x="496.75" y="296.15000000000003" font-size="6.67" fill="#202020" textLength="9.6" lengthAdjust="spacingAndGlyphs" stroke="#202020" stroke-width="0.12">252</text>
<rect x="592.1" y="289.1" width="25.299999999999955" height="9.299999999999955" fill="#e8e8e8" />
<line x1="592.1" y1="289.5" x2="617.4" y2="289.5" stroke="#707070" stroke-width="0.8" />
<line x1="592.5" y1="289.1" x2="592.5" y2="298.4" stroke="#707070" stroke-width="0.8" />
<line x1="592.1" y1="298.0" x2="617.4" y2="298.0" stroke="#e4e4e4" stroke-width="0.8" />
<line x1="617.0" y1="289.1" x2="617.0" y2="298.4" stroke="#e4e4e4" stroke-width="0.8" />
<text x="597.7" y="296.05" font-size="6.67" fill="#202020" textLength="14.1" lengthAdjust="spacingAndGlyphs" stroke="#202020" stroke-width="0.12">79.02</text>
<line x1="549.7" y1="311.6" x2="630" y2="311.6" stroke="#a01818" stroke-width="0.9" />
<circle cx="549.7" cy="311.6" r="1.6" fill="#901010" stroke="none" stroke-width="1"/>
<circle cx="630" cy="311.6" r="1.6" fill="#901010" stroke="none" stroke-width="1"/>
<line x1="549.7" y1="311.6" x2="549.7" y2="324.5" stroke="#d07070" stroke-width="0.9" stroke-dasharray="3,2"/>
<rect x="578.2" y="305.4" width="22.09999999999991" height="10.600000000000023" fill="#ffffff" />
<line x1="578.2" y1="305.79999999999995" x2="600.3" y2="305.79999999999995" stroke="#707070" stroke-width="0.8" />
<line x1="578.6" y1="305.4" x2="578.6" y2="316" stroke="#707070" stroke-width="0.8" />
<line x1="578.2" y1="315.6" x2="600.3" y2="315.6" stroke="#e4e4e4" stroke-width="0.8" />
<line x1="599.9" y1="305.4" x2="599.9" y2="316" stroke="#e4e4e4" stroke-width="0.8" />
<text x="584.45" y="313.0" font-size="6.67" fill="#202020" textLength="9.6" lengthAdjust="spacingAndGlyphs" stroke="#202020" stroke-width="0.12">100</text>
<line x1="347" y1="324.6" x2="549.7" y2="324.6" stroke="#d07070" stroke-width="1.2" stroke-dasharray="5,3"/>
<circle cx="350" cy="324.6" r="1.6" fill="#901010" stroke="none" stroke-width="1"/>
<line x1="436.5" y1="296.5" x2="436.5" y2="392.8" stroke="#d07070" stroke-width="1" stroke-dasharray="5,2.5"/>
<line x1="350" y1="324.6" x2="350" y2="400" stroke="#a01818" stroke-width="0.9" />
<circle cx="350" cy="387.5" r="1.6" fill="#901010" stroke="none" stroke-width="1"/>
<circle cx="350" cy="400" r="1.6" fill="#901010" stroke="none" stroke-width="1"/>
<rect x="326" y="352.5" width="21.399999999999977" height="10.699999999999989" fill="#ffffff" />
<line x1="326" y1="352.9" x2="347.4" y2="352.9" stroke="#707070" stroke-width="0.8" />
<line x1="326.4" y1="352.5" x2="326.4" y2="363.2" stroke="#707070" stroke-width="0.8" />
<line x1="326" y1="362.8" x2="347.4" y2="362.8" stroke="#e4e4e4" stroke-width="0.8" />
<line x1="347.0" y1="352.5" x2="347.0" y2="363.2" stroke="#e4e4e4" stroke-width="0.8" />
<text x="331.9" y="360.15000000000003" font-size="6.67" fill="#202020" textLength="9.6" lengthAdjust="spacingAndGlyphs" stroke="#202020" stroke-width="0.12">150</text>
<line x1="329.5" y1="354.5" x2="329.5" y2="361.2" stroke="#000" stroke-width="0.6" />
<rect x="330.7" y="387.9" width="16.100000000000023" height="10.700000000000045" fill="#ffffff" />
<line x1="330.7" y1="388.29999999999995" x2="346.8" y2="388.29999999999995" stroke="#707070" stroke-width="0.8" />
<line x1="331.09999999999997" y1="387.9" x2="331.09999999999997" y2="398.6" stroke="#707070" stroke-width="0.8" />
<line x1="330.7" y1="398.20000000000005" x2="346.8" y2="398.20000000000005" stroke="#e4e4e4" stroke-width="0.8" />
<line x1="346.40000000000003" y1="387.9" x2="346.40000000000003" y2="398.6" stroke="#e4e4e4" stroke-width="0.8" />
<text x="335.45" y="395.55" font-size="6.67" fill="#202020" textLength="6.6" lengthAdjust="spacingAndGlyphs" stroke="#202020" stroke-width="0.12">32</text>
<rect x="358.1" y="378.9" width="15.5" height="10.0" fill="#ffffff" />
<line x1="358.1" y1="379.29999999999995" x2="373.6" y2="379.29999999999995" stroke="#707070" stroke-width="0.8" />
<line x1="358.5" y1="378.9" x2="358.5" y2="388.9" stroke="#707070" stroke-width="0.8" />
<line x1="358.1" y1="388.5" x2="373.6" y2="388.5" stroke="#e4e4e4" stroke-width="0.8" />
<line x1="373.20000000000005" y1="378.9" x2="373.20000000000005" y2="388.9" stroke="#e4e4e4" stroke-width="0.8" />
<text x="362.55" y="386.2" font-size="6.67" fill="#202020" textLength="6.6" lengthAdjust="spacingAndGlyphs" stroke="#202020" stroke-width="0.12">22</text>
<line x1="350" y1="400" x2="376" y2="400" stroke="#d07070" stroke-width="1" stroke-dasharray="3,2"/>
<line x1="342" y1="387.5" x2="376" y2="387.5" stroke="#d07070" stroke-width="0.8" />
<line x1="360" y1="393.2" x2="376" y2="393.2" stroke="#d07070" stroke-width="1" stroke-dasharray="3,2"/>
<line x1="365.6" y1="393.2" x2="365.6" y2="400" stroke="#a01818" stroke-width="0.9" />
<circle cx="365.6" cy="393.2" r="1.6" fill="#901010" stroke="none" stroke-width="1"/>
<circle cx="365.6" cy="400" r="1.6" fill="#901010" stroke="none" stroke-width="1"/>
<line x1="375.3" y1="371.8" x2="438.9" y2="371.8" stroke="#a01818" stroke-width="0.9" />
<circle cx="375.3" cy="371.8" r="1.6" fill="#901010" stroke="none" stroke-width="1"/>
<circle cx="438.9" cy="371.8" r="1.6" fill="#901010" stroke="none" stroke-width="1"/>
<line x1="375.3" y1="366" x2="375.3" y2="382" stroke="#a01818" stroke-width="0.9" />
<rect x="396" y="358.9" width="22.600000000000023" height="10.700000000000045" fill="#ffffff" />
<line x1="396" y1="359.29999999999995" x2="418.6" y2="359.29999999999995" stroke="#707070" stroke-width="0.8" />
<line x1="396.4" y1="358.9" x2="396.4" y2="369.6" stroke="#707070" stroke-width="0.8" />
<line x1="396" y1="369.20000000000005" x2="418.6" y2="369.20000000000005" stroke="#e4e4e4" stroke-width="0.8" />
<line x1="418.20000000000005" y1="358.9" x2="418.20000000000005" y2="369.6" stroke="#e4e4e4" stroke-width="0.8" />
<text x="402.5" y="366.55" font-size="6.67" fill="#202020" textLength="9.6" lengthAdjust="spacingAndGlyphs" stroke="#202020" stroke-width="0.12">100</text>
<polyline points="375.3,393.5 375.3,387.4 439,387.4 439,378.9 457.1,378.9 457.1,369.6 476.4,369.6 476.4,360.4 494.6,360.4 494.6,351.8 512.4,351.8 512.4,343.2 531.7,343.2 531.7,333.6 549.7,333.6 549.7,324.5" stroke="#a01818" stroke-width="0.9" fill="none" />
<line x1="549.7" y1="324.5" x2="630" y2="324.5" stroke="#d07070" stroke-width="1" />
<line x1="630" y1="324.5" x2="660" y2="324.5" stroke="#d07070" stroke-width="0.9" stroke-dasharray="3,2"/>
<line x1="630" y1="335.4" x2="660" y2="335.4" stroke="#d07070" stroke-width="0.9" stroke-dasharray="3,2"/>
<line x1="457.1" y1="348.1" x2="476" y2="348.1" stroke="#a01818" stroke-width="0.9" />
<circle cx="457.1" cy="348.1" r="1.6" fill="#901010" stroke="none" stroke-width="1"/>
<circle cx="476" cy="348.1" r="1.6" fill="#901010" stroke="none" stroke-width="1"/>
<line x1="457.1" y1="343" x2="457.1" y2="357" stroke="#d07070" stroke-width="0.9" />
<line x1="476" y1="343" x2="476" y2="357" stroke="#d07070" stroke-width="0.9" />
<rect x="457.1" y="333.1" width="21.5" height="10.799999999999955" fill="#ffffff" />
<line x1="457.1" y1="333.5" x2="478.6" y2="333.5" stroke="#707070" stroke-width="0.8" />
<line x1="457.5" y1="333.1" x2="457.5" y2="343.9" stroke="#707070" stroke-width="0.8" />
<line x1="457.1" y1="343.5" x2="478.6" y2="343.5" stroke="#e4e4e4" stroke-width="0.8" />
<line x1="478.20000000000005" y1="333.1" x2="478.20000000000005" y2="343.9" stroke="#e4e4e4" stroke-width="0.8" />
<text x="464.55" y="340.8" font-size="6.67" fill="#202020" textLength="6.6" lengthAdjust="spacingAndGlyphs" stroke="#202020" stroke-width="0.12">28</text>
<rect x="488.9" y="336.1" width="21.80000000000001" height="10.799999999999955" fill="#ffffff" />
<line x1="488.9" y1="336.5" x2="510.7" y2="336.5" stroke="#707070" stroke-width="0.8" />
<line x1="489.29999999999995" y1="336.1" x2="489.29999999999995" y2="346.9" stroke="#707070" stroke-width="0.8" />
<line x1="488.9" y1="346.5" x2="510.7" y2="346.5" stroke="#e4e4e4" stroke-width="0.8" />
<line x1="510.3" y1="336.1" x2="510.3" y2="346.9" stroke="#e4e4e4" stroke-width="0.8" />
<text x="498.0" y="343.8" font-size="6.67" fill="#202020" textLength="3.6" lengthAdjust="spacingAndGlyphs" stroke="#202020" stroke-width="0.12">5</text>
<rect x="517.6" y="365.3" width="21.399999999999977" height="10.699999999999989" fill="#ffffff" />
<line x1="517.6" y1="365.7" x2="539" y2="365.7" stroke="#707070" stroke-width="0.8" />
<line x1="518.0" y1="365.3" x2="518.0" y2="376" stroke="#707070" stroke-width="0.8" />
<line x1="517.6" y1="375.6" x2="539" y2="375.6" stroke="#e4e4e4" stroke-width="0.8" />
<line x1="538.6" y1="365.3" x2="538.6" y2="376" stroke="#e4e4e4" stroke-width="0.8" />
<text x="525.0" y="372.95" font-size="6.67" fill="#202020" textLength="6.6" lengthAdjust="spacingAndGlyphs" stroke="#202020" stroke-width="0.12">15</text>
<polygon points="376.1,392.8 436.8,392.8 570.7,328.6 630,328.6 630,335.4 573.5,335.4 439.6,399.6 376.1,399.6" fill="#707070" stroke="#404040" stroke-width="0.6" />
<line x1="401.4" y1="393.5" x2="401.4" y2="399" stroke="#a01818" stroke-width="0.8" stroke-dasharray="2,1.5"/>
<line x1="427.1" y1="393.5" x2="427.1" y2="399" stroke="#a01818" stroke-width="0.8" stroke-dasharray="2,1.5"/>
<line x1="579" y1="329.2" x2="579" y2="335" stroke="#a01818" stroke-width="0.8" stroke-dasharray="2,1.5"/>
<line x1="609" y1="329.2" x2="609" y2="335" stroke="#a01818" stroke-width="0.8" stroke-dasharray="2,1.5"/>
<line x1="445.3" y1="389.5" x2="446.5" y2="395.5" stroke="#a01818" stroke-width="0.8" />
<line x1="560.3" y1="333.8" x2="561" y2="339.5" stroke="#a01818" stroke-width="0.8" />
<circle cx="512.6" cy="351.8" r="1.6" fill="#901010" stroke="none" stroke-width="1"/>
<circle cx="515" cy="356" r="1.6" fill="#901010" stroke="none" stroke-width="1"/>
<circle cx="517.2" cy="361.5" r="1.6" fill="#901010" stroke="none" stroke-width="1"/>
<line x1="512.6" y1="351.8" x2="517.2" y2="361.5" stroke="#a01818" stroke-width="0.9" />
<line x1="641" y1="328.8" x2="641" y2="335.4" stroke="#a01818" stroke-width="0.9" />
<circle cx="641" cy="329" r="1.6" fill="#901010" stroke="none" stroke-width="1"/>
<circle cx="641" cy="335.4" r="1.6" fill="#901010" stroke="none" stroke-width="1"/>
<rect x="632.9" y="316.1" width="13.200000000000045" height="10.099999999999966" fill="#ffffff" />
<line x1="632.9" y1="316.5" x2="646.1" y2="316.5" stroke="#707070" stroke-width="0.8" />
<line x1="633.3" y1="316.1" x2="633.3" y2="326.2" stroke="#707070" stroke-width="0.8" />
<line x1="632.9" y1="325.8" x2="646.1" y2="325.8" stroke="#e4e4e4" stroke-width="0.8" />
<line x1="645.7" y1="316.1" x2="645.7" y2="326.2" stroke="#e4e4e4" stroke-width="0.8" />
<text x="636.2" y="323.45" font-size="6.67" fill="#202020" textLength="6.6" lengthAdjust="spacingAndGlyphs" stroke="#202020" stroke-width="0.12">15</text>
<line x1="656.4" y1="324.5" x2="656.4" y2="335.4" stroke="#a01818" stroke-width="0.9" />
<circle cx="656.4" cy="324.5" r="1.6" fill="#901010" stroke="none" stroke-width="1"/>
<circle cx="656.4" cy="335.4" r="1.6" fill="#901010" stroke="none" stroke-width="1"/>
<rect x="661.3" y="325.1" width="15.0" height="9.699999999999989" fill="#ffffff" />
<line x1="661.3" y1="325.5" x2="676.3" y2="325.5" stroke="#707070" stroke-width="0.8" />
<line x1="661.6999999999999" y1="325.1" x2="661.6999999999999" y2="334.8" stroke="#707070" stroke-width="0.8" />
<line x1="661.3" y1="334.40000000000003" x2="676.3" y2="334.40000000000003" stroke="#e4e4e4" stroke-width="0.8" />
<line x1="675.9" y1="325.1" x2="675.9" y2="334.8" stroke="#e4e4e4" stroke-width="0.8" />
<text x="665.5" y="332.25000000000006" font-size="6.67" fill="#202020" textLength="6.6" lengthAdjust="spacingAndGlyphs" stroke="#202020" stroke-width="0.12">25</text>
<polygon points="386.4,404.6 378.9,411.1 393.9,411.1" fill="#000" stroke="none" stroke-width="1" />
<rect x="394.09999999999997" y="405.0" width="5.6" height="5.6" fill="#ffffff" stroke="#808080" stroke-width="0.8" />
<polyline points="395.0,407.40000000000003 396.2,408.90000000000003 398.59999999999997,406.1" stroke="#000" stroke-width="1.1" fill="none" />
<text x="402.2" y="410.5" font-size="7.1" fill="#000" font-weight="bold" textLength="9.1" lengthAdjust="spacingAndGlyphs" stroke="#000" stroke-width="0.12">A1</text>
<rect x="378.29999999999995" y="413.90000000000003" width="15.0" height="9.0" fill="#ffffff" />
<line x1="378.29999999999995" y1="414.3" x2="393.29999999999995" y2="414.3" stroke="#707070" stroke-width="0.8" />
<line x1="378.69999999999993" y1="413.90000000000003" x2="378.69999999999993" y2="422.90000000000003" stroke="#707070" stroke-width="0.8" />
<line x1="378.29999999999995" y1="422.50000000000006" x2="393.29999999999995" y2="422.50000000000006" stroke="#e4e4e4" stroke-width="0.8" />
<line x1="392.9" y1="413.90000000000003" x2="392.9" y2="422.90000000000003" stroke="#e4e4e4" stroke-width="0.8" />
<text x="382.5" y="420.70000000000005" font-size="6.67" fill="#202020" textLength="6.6" lengthAdjust="spacingAndGlyphs" stroke="#202020" stroke-width="0.12">50</text>
<polygon points="436.4,404.6 428.9,411.1 443.9,411.1" fill="#000" stroke="none" stroke-width="1" />
<rect x="444.09999999999997" y="405.0" width="5.6" height="5.6" fill="#ffffff" stroke="#808080" stroke-width="0.8" />
<text x="452.2" y="410.5" font-size="7.1" fill="#000" font-weight="bold" textLength="9.1" lengthAdjust="spacingAndGlyphs" stroke="#000" stroke-width="0.12">A2</text>
<rect x="428.29999999999995" y="413.90000000000003" width="15.0" height="9.0" fill="#ffffff" />
<line x1="428.29999999999995" y1="414.3" x2="443.29999999999995" y2="414.3" stroke="#707070" stroke-width="0.8" />
<line x1="428.69999999999993" y1="413.90000000000003" x2="428.69999999999993" y2="422.90000000000003" stroke="#707070" stroke-width="0.8" />
<line x1="428.29999999999995" y1="422.50000000000006" x2="443.29999999999995" y2="422.50000000000006" stroke="#e4e4e4" stroke-width="0.8" />
<line x1="442.9" y1="413.90000000000003" x2="442.9" y2="422.90000000000003" stroke="#e4e4e4" stroke-width="0.8" />
<text x="432.5" y="420.70000000000005" font-size="6.67" fill="#a0a0a0" textLength="6.6" lengthAdjust="spacingAndGlyphs" stroke="#a0a0a0" stroke-width="0.12">50</text>
<polygon points="572,342.6 564.5,349.1 579.5,349.1" fill="#000" stroke="none" stroke-width="1" />
<rect x="579.7" y="343.0" width="5.6" height="5.6" fill="#ffffff" stroke="#808080" stroke-width="0.8" />
<text x="587.8" y="348.5" font-size="7.1" fill="#000" font-weight="bold" textLength="9.1" lengthAdjust="spacingAndGlyphs" stroke="#000" stroke-width="0.12">A3</text>
<rect x="563.9" y="351.90000000000003" width="15.0" height="9.0" fill="#ffffff" />
<line x1="563.9" y1="352.3" x2="578.9" y2="352.3" stroke="#707070" stroke-width="0.8" />
<line x1="564.3" y1="351.90000000000003" x2="564.3" y2="360.90000000000003" stroke="#707070" stroke-width="0.8" />
<line x1="563.9" y1="360.50000000000006" x2="578.9" y2="360.50000000000006" stroke="#e4e4e4" stroke-width="0.8" />
<line x1="578.5" y1="351.90000000000003" x2="578.5" y2="360.90000000000003" stroke="#e4e4e4" stroke-width="0.8" />
<text x="568.1" y="358.70000000000005" font-size="6.67" fill="#a0a0a0" textLength="6.6" lengthAdjust="spacingAndGlyphs" stroke="#a0a0a0" stroke-width="0.12">50</text>
<polygon points="621,342.6 613.5,349.1 628.5,349.1" fill="#000" stroke="none" stroke-width="1" />
<rect x="628.7" y="343.0" width="5.6" height="5.6" fill="#ffffff" stroke="#808080" stroke-width="0.8" />
<polyline points="629.6,345.40000000000003 630.8,346.90000000000003 633.2,344.1" stroke="#000" stroke-width="1.1" fill="none" />
<text x="636.8" y="348.5" font-size="7.1" fill="#000" font-weight="bold" textLength="9.1" lengthAdjust="spacingAndGlyphs" stroke="#000" stroke-width="0.12">A4</text>
<rect x="612.9" y="351.90000000000003" width="15.0" height="9.0" fill="#ffffff" />
<line x1="612.9" y1="352.3" x2="627.9" y2="352.3" stroke="#707070" stroke-width="0.8" />
<line x1="613.3" y1="351.90000000000003" x2="613.3" y2="360.90000000000003" stroke="#707070" stroke-width="0.8" />
<line x1="612.9" y1="360.50000000000006" x2="627.9" y2="360.50000000000006" stroke="#e4e4e4" stroke-width="0.8" />
<line x1="627.5" y1="351.90000000000003" x2="627.5" y2="360.90000000000003" stroke="#e4e4e4" stroke-width="0.8" />
<text x="617.1" y="358.70000000000005" font-size="6.67" fill="#202020" textLength="6.6" lengthAdjust="spacingAndGlyphs" stroke="#202020" stroke-width="0.12">50</text>
<line x1="576.3" y1="383.5" x2="643.8" y2="383.5" stroke="#a01818" stroke-width="0.9" />
<circle cx="576.3" cy="383.5" r="1.6" fill="#901010" stroke="none" stroke-width="1"/>
<circle cx="643.8" cy="383.5" r="1.6" fill="#901010" stroke="none" stroke-width="1"/>
<line x1="576.3" y1="383.5" x2="576.3" y2="393" stroke="#a01818" stroke-width="0.9" />
<line x1="643.8" y1="383.5" x2="643.8" y2="393" stroke="#a01818" stroke-width="0.9" />
<rect x="599" y="372" width="22" height="10.600000000000023" fill="#ffffff" />
<line x1="599" y1="372.4" x2="621" y2="372.4" stroke="#707070" stroke-width="0.8" />
<line x1="599.4" y1="372" x2="599.4" y2="382.6" stroke="#707070" stroke-width="0.8" />
<line x1="599" y1="382.20000000000005" x2="621" y2="382.20000000000005" stroke="#e4e4e4" stroke-width="0.8" />
<line x1="620.6" y1="372" x2="620.6" y2="382.6" stroke="#e4e4e4" stroke-width="0.8" />
<text x="606.7" y="379.6" font-size="6.67" fill="#202020" textLength="6.6" lengthAdjust="spacingAndGlyphs" stroke="#202020" stroke-width="0.12">90</text>
<rect x="576.3" y="395.2" width="68" height="13.1" fill="#c0c0c0" stroke="#505050" stroke-width="0.8" />
<line x1="564.4" y1="395" x2="564.4" y2="408" stroke="#a01818" stroke-width="0.9" />
<circle cx="564.4" cy="395" r="1.6" fill="#901010" stroke="none" stroke-width="1"/>
<circle cx="564.4" cy="408" r="1.6" fill="#901010" stroke="none" stroke-width="1"/>
<line x1="560" y1="395" x2="574" y2="395" stroke="#a01818" stroke-width="0.8" />
<line x1="560" y1="408" x2="574" y2="408" stroke="#a01818" stroke-width="0.8" />
<rect x="539.4" y="397.3" width="20.200000000000045" height="10.0" fill="#e8e8e8" />
<line x1="539.4" y1="397.7" x2="559.6" y2="397.7" stroke="#707070" stroke-width="0.8" />
<line x1="539.8" y1="397.3" x2="539.8" y2="407.3" stroke="#707070" stroke-width="0.8" />
<line x1="539.4" y1="406.90000000000003" x2="559.6" y2="406.90000000000003" stroke="#e4e4e4" stroke-width="0.8" />
<line x1="559.2" y1="397.3" x2="559.2" y2="407.3" stroke="#e4e4e4" stroke-width="0.8" />
<text x="546.2" y="404.6" font-size="6.67" fill="#202020" textLength="6.6" lengthAdjust="spacingAndGlyphs" stroke="#202020" stroke-width="0.12">15</text>
<text x="592.1" y="416.8" font-size="7.83" fill="#202020" textLength="38.0" lengthAdjust="spacingAndGlyphs" stroke="#202020" stroke-width="0.12">Sezione rampa</text>
<text x="667.3" y="415.4" font-size="7.83" fill="#000" font-weight="bold" textLength="13.8" lengthAdjust="spacingAndGlyphs" stroke="#000" stroke-width="0.12">[cm]</text>
<rect x="322.3" y="438.5" width="113.69999999999999" height="41.5" fill="#ffffd2" />
<line x1="322.3" y1="438.9" x2="436" y2="438.9" stroke="#d8d8d8" stroke-width="0.8" />
<line x1="322.7" y1="438.5" x2="322.7" y2="480" stroke="#d8d8d8" stroke-width="0.8" />
<line x1="322.3" y1="479.6" x2="436" y2="479.6" stroke="#c0c0c0" stroke-width="0.8" />
<line x1="435.6" y1="438.5" x2="435.6" y2="480" stroke="#c0c0c0" stroke-width="0.8" />
<rect x="323.8" y="442.3" width="110.69999999999999" height="36.19999999999999" fill="none" stroke="#c8c8c8" stroke-width="0.7" />
<rect x="326.3" y="439.5" width="53.19999999999999" height="5.5" fill="#ffffd2" />
<text x="327.7" y="446.1" font-size="8.7" fill="#202020" textLength="50.1" lengthAdjust="spacingAndGlyphs" stroke="#202020" stroke-width="0.12">Ulteriori informazioni</text>
<text x="330.7" y="455" font-size="7.54" fill="#202020" textLength="36.6" lengthAdjust="spacingAndGlyphs" stroke="#202020" stroke-width="0.12">Numero alzate</text>
<rect x="403.7" y="446" width="22.0" height="8.600000000000023" fill="#ffffff" />
<line x1="403.7" y1="446.4" x2="425.7" y2="446.4" stroke="#707070" stroke-width="0.8" />
<line x1="404.09999999999997" y1="446" x2="404.09999999999997" y2="454.6" stroke="#707070" stroke-width="0.8" />
<line x1="403.7" y1="454.20000000000005" x2="425.7" y2="454.20000000000005" stroke="#e4e4e4" stroke-width="0.8" />
<line x1="425.3" y1="446" x2="425.3" y2="454.6" stroke="#e4e4e4" stroke-width="0.8" />
<text x="405.0" y="452.7" font-size="6.96" fill="#202020" textLength="3.35" lengthAdjust="spacingAndGlyphs" stroke="#202020" stroke-width="0.12">9</text>
<text x="330.7" y="464.3" font-size="7.54" fill="#202020" textLength="59.6" lengthAdjust="spacingAndGlyphs" stroke="#202020" stroke-width="0.12">Alzata: (2a + p = 61.34)</text>
<rect x="403.7" y="456.9" width="22.0" height="8.0" fill="#e8e8e8" />
<line x1="403.7" y1="457.29999999999995" x2="425.7" y2="457.29999999999995" stroke="#707070" stroke-width="0.8" />
<line x1="404.09999999999997" y1="456.9" x2="404.09999999999997" y2="464.9" stroke="#707070" stroke-width="0.8" />
<line x1="403.7" y1="464.5" x2="425.7" y2="464.5" stroke="#e4e4e4" stroke-width="0.8" />
<line x1="425.3" y1="456.9" x2="425.3" y2="464.9" stroke="#e4e4e4" stroke-width="0.8" />
<text x="405.0" y="463.29999999999995" font-size="6.96" fill="#202020" textLength="14.35" lengthAdjust="spacingAndGlyphs" stroke="#202020" stroke-width="0.12">16.67</text>
<text x="330.7" y="475" font-size="7.54" fill="#202020" textLength="52.6" lengthAdjust="spacingAndGlyphs" stroke="#202020" stroke-width="0.12">Interpiano strutturale</text>
<rect x="403.7" y="467.1" width="22.0" height="8.599999999999966" fill="#e8e8e8" />
<line x1="403.7" y1="467.5" x2="425.7" y2="467.5" stroke="#707070" stroke-width="0.8" />
<line x1="404.09999999999997" y1="467.1" x2="404.09999999999997" y2="475.7" stroke="#707070" stroke-width="0.8" />
<line x1="403.7" y1="475.3" x2="425.7" y2="475.3" stroke="#e4e4e4" stroke-width="0.8" />
<line x1="425.3" y1="467.1" x2="425.3" y2="475.7" stroke="#e4e4e4" stroke-width="0.8" />
<text x="405.0" y="473.79999999999995" font-size="6.96" fill="#202020" textLength="8.85" lengthAdjust="spacingAndGlyphs" stroke="#202020" stroke-width="0.12">150</text>
<rect x="322.3" y="482.3" width="113.69999999999999" height="41.99999999999994" fill="#ffc080" />
<line x1="322.3" y1="482.7" x2="436" y2="482.7" stroke="#d8d8d8" stroke-width="0.8" />
<line x1="322.7" y1="482.3" x2="322.7" y2="524.3" stroke="#d8d8d8" stroke-width="0.8" />
<line x1="322.3" y1="523.9" x2="436" y2="523.9" stroke="#c0c0c0" stroke-width="0.8" />
<line x1="435.6" y1="482.3" x2="435.6" y2="524.3" stroke="#c0c0c0" stroke-width="0.8" />
<rect x="323.8" y="486.1" width="110.69999999999999" height="36.69999999999993" fill="none" stroke="#c8c8c8" stroke-width="0.7" />
<rect x="326.3" y="483.3" width="46.19999999999999" height="5.5" fill="#ffc080" />
<text x="327.7" y="489.90000000000003" font-size="8.7" fill="#202020" textLength="43.1" lengthAdjust="spacingAndGlyphs" stroke="#202020" stroke-width="0.12">Carichi (daN/m2)</text>
<text x="328.7" y="499" font-size="7.54" fill="#202020" textLength="30.6" lengthAdjust="spacingAndGlyphs" stroke="#202020" stroke-width="0.12">Permanente</text>
<rect x="403.2" y="488.6" width="22.5" height="10.799999999999955" fill="#ffffff" />
<line x1="403.2" y1="489.0" x2="425.7" y2="489.0" stroke="#707070" stroke-width="0.8" />
<line x1="403.59999999999997" y1="488.6" x2="403.59999999999997" y2="499.4" stroke="#707070" stroke-width="0.8" />
<line x1="403.2" y1="499.0" x2="425.7" y2="499.0" stroke="#e4e4e4" stroke-width="0.8" />
<line x1="425.3" y1="488.6" x2="425.3" y2="499.4" stroke="#e4e4e4" stroke-width="0.8" />
<text x="404.5" y="496.4" font-size="6.96" fill="#202020" textLength="8.85" lengthAdjust="spacingAndGlyphs" stroke="#202020" stroke-width="0.12">600</text>
<text x="328.7" y="511" font-size="7.54" fill="#202020" textLength="21.6" lengthAdjust="spacingAndGlyphs" stroke="#202020" stroke-width="0.12">Variabile</text>
<rect x="403.2" y="501.7" width="22.5" height="10.599999999999966" fill="#ffffff" />
<line x1="403.2" y1="502.09999999999997" x2="425.7" y2="502.09999999999997" stroke="#707070" stroke-width="0.8" />
<line x1="403.59999999999997" y1="501.7" x2="403.59999999999997" y2="512.3" stroke="#707070" stroke-width="0.8" />
<line x1="403.2" y1="511.9" x2="425.7" y2="511.9" stroke="#e4e4e4" stroke-width="0.8" />
<line x1="425.3" y1="501.7" x2="425.3" y2="512.3" stroke="#e4e4e4" stroke-width="0.8" />
<text x="404.5" y="509.4" font-size="6.96" fill="#202020" textLength="8.85" lengthAdjust="spacingAndGlyphs" stroke="#202020" stroke-width="0.12">400</text>
<rect x="329.9" y="516.1" width="5.6" height="5.6" fill="#ffffff" stroke="#808080" stroke-width="0.8" />
<polyline points="330.8,518.5 332.0,520.0 334.4,517.2" stroke="#000" stroke-width="1.1" fill="none" />
<text x="337.7" y="522" font-size="7.54" fill="#202020" textLength="56.6" lengthAdjust="spacingAndGlyphs" stroke="#202020" stroke-width="0.12">Aggiungi Peso Proprio</text>
<rect x="438.4" y="438.5" width="113.20000000000005" height="41.5" fill="#ffe0c2" />
<line x1="438.4" y1="438.9" x2="551.6" y2="438.9" stroke="#d8d8d8" stroke-width="0.8" />
<line x1="438.79999999999995" y1="438.5" x2="438.79999999999995" y2="480" stroke="#d8d8d8" stroke-width="0.8" />
<line x1="438.4" y1="479.6" x2="551.6" y2="479.6" stroke="#c0c0c0" stroke-width="0.8" />
<line x1="551.2" y1="438.5" x2="551.2" y2="480" stroke="#c0c0c0" stroke-width="0.8" />
<rect x="439.9" y="442.3" width="110.20000000000005" height="36.19999999999999" fill="none" stroke="#c8c8c8" stroke-width="0.7" />
<rect x="442.4" y="439.5" width="87.10000000000002" height="5.5" fill="#ffe0c2" />
<text x="443.8" y="446.1" font-size="8.7" fill="#202020" textLength="84.0" lengthAdjust="spacingAndGlyphs" stroke="#202020" stroke-width="0.12">Tipo Armature (0 per non inserire)</text>
<text x="446.7" y="459" font-size="7.54" fill="#202020" textLength="44.6" lengthAdjust="spacingAndGlyphs" stroke="#202020" stroke-width="0.12">Schema armature</text>
<rect x="519.5" y="450" width="22.600000000000023" height="10.300000000000011" fill="#ffffff" />
<line x1="519.5" y1="450.4" x2="542.1" y2="450.4" stroke="#707070" stroke-width="0.8" />
<line x1="519.9" y1="450" x2="519.9" y2="460.3" stroke="#707070" stroke-width="0.8" />
<line x1="519.5" y1="459.90000000000003" x2="542.1" y2="459.90000000000003" stroke="#e4e4e4" stroke-width="0.8" />
<line x1="541.7" y1="450" x2="541.7" y2="460.3" stroke="#e4e4e4" stroke-width="0.8" />
<text x="520.8" y="457.54999999999995" font-size="6.96" fill="#202020" textLength="6.1" lengthAdjust="spacingAndGlyphs" stroke="#202020" stroke-width="0.12">12</text>
<text x="446.7" y="472" font-size="7.54" fill="#202020" textLength="36.6" lengthAdjust="spacingAndGlyphs" stroke="#202020" stroke-width="0.12">Schema staffe</text>
<rect x="519.5" y="462.9" width="22.600000000000023" height="10.600000000000023" fill="#ffffff" />
<line x1="519.5" y1="463.29999999999995" x2="542.1" y2="463.29999999999995" stroke="#707070" stroke-width="0.8" />
<line x1="519.9" y1="462.9" x2="519.9" y2="473.5" stroke="#707070" stroke-width="0.8" />
<line x1="519.5" y1="473.1" x2="542.1" y2="473.1" stroke="#e4e4e4" stroke-width="0.8" />
<line x1="541.7" y1="462.9" x2="541.7" y2="473.5" stroke="#e4e4e4" stroke-width="0.8" />
<text x="520.8" y="470.59999999999997" font-size="6.96" fill="#202020" textLength="3.35" lengthAdjust="spacingAndGlyphs" stroke="#202020" stroke-width="0.12">2</text>
<rect x="438.4" y="482.8" width="113.20000000000005" height="41.49999999999994" fill="#e2fde2" />
<line x1="438.4" y1="483.2" x2="551.6" y2="483.2" stroke="#d8d8d8" stroke-width="0.8" />
<line x1="438.79999999999995" y1="482.8" x2="438.79999999999995" y2="524.3" stroke="#d8d8d8" stroke-width="0.8" />
<line x1="438.4" y1="523.9" x2="551.6" y2="523.9" stroke="#c0c0c0" stroke-width="0.8" />
<line x1="551.2" y1="482.8" x2="551.2" y2="524.3" stroke="#c0c0c0" stroke-width="0.8" />
<rect x="439.9" y="486.6" width="110.20000000000005" height="36.19999999999993" fill="none" stroke="#c8c8c8" stroke-width="0.7" />
<rect x="442.4" y="483.8" width="22.100000000000023" height="5.5" fill="#e2fde2" />
<text x="443.8" y="490.40000000000003" font-size="8.7" fill="#202020" textLength="19.0" lengthAdjust="spacingAndGlyphs" stroke="#202020" stroke-width="0.12">Opzioni</text>
<rect x="445.4" y="491.4" width="5.6" height="5.6" fill="#ffffff" stroke="#808080" stroke-width="0.8" />
<polyline points="446.3,493.8 447.5,495.3 449.9,492.5" stroke="#000" stroke-width="1.1" fill="none" />
<text x="454.7" y="497" font-size="7.54" fill="#202020" textLength="19.6" lengthAdjust="spacingAndGlyphs" stroke="#202020" stroke-width="0.12">Calcola</text>
<rect x="445.4" y="498.9" width="5.6" height="5.6" fill="#ffffff" stroke="#808080" stroke-width="0.8" />
<text x="454.7" y="504.5" font-size="7.54" fill="#202020" textLength="36.1" lengthAdjust="spacingAndGlyphs" stroke="#202020" stroke-width="0.12">Crea relazione</text>
<rect x="445.4" y="506.7" width="5.6" height="5.6" fill="#ffffff" stroke="#808080" stroke-width="0.8" />
<text x="454.7" y="512.3" font-size="7.54" fill="#202020" textLength="36.1" lengthAdjust="spacingAndGlyphs" stroke="#202020" stroke-width="0.12">Salva disegno</text>
<rect x="445.4" y="514.6" width="5.6" height="5.6" fill="#ffffff" stroke="#808080" stroke-width="0.8" />
<text x="454.7" y="520.2" font-size="7.54" fill="#202020" textLength="33.6" lengthAdjust="spacingAndGlyphs" stroke="#202020" stroke-width="0.12">Salva travata</text>
<rect x="495.4" y="491.4" width="5.6" height="5.6" fill="#ffffff" stroke="#808080" stroke-width="0.8" />
<polyline points="496.3,493.8 497.5,495.3 499.9,492.5" stroke="#000" stroke-width="1.1" fill="none" />
<text x="504.7" y="497" font-size="7.54" fill="#202020" textLength="37.6" lengthAdjust="spacingAndGlyphs" stroke="#202020" stroke-width="0.12">Salva pannello</text>
<text x="601.7" y="450.4" font-size="7.68" fill="#202020" textLength="32.6" lengthAdjust="spacingAndGlyphs" stroke="#202020" stroke-width="0.12">Nome trave :</text>
<rect x="637.6" y="443" width="49.8" height="9" fill="#ffffff" />
<line x1="637.6" y1="443.3" x2="687.4" y2="443.3" stroke="#808080" stroke-width="0.8" />
<line x1="637.9" y1="443" x2="637.9" y2="452" stroke="#808080" stroke-width="0.8" />
<text x="639.2" y="450" font-size="7.25" fill="#202020" textLength="38.1" lengthAdjust="spacingAndGlyphs" stroke="#202020" stroke-width="0.12">RampaScala01</text>
<rect x="621" y="474" width="67" height="16.600000000000023" fill="#e8e8e8" />
<line x1="621" y1="474.4" x2="688" y2="474.4" stroke="#ffffff" stroke-width="0.8" />
<line x1="621.4" y1="474" x2="621.4" y2="490.6" stroke="#ffffff" stroke-width="0.8" />
<line x1="621" y1="490.1" x2="688" y2="490.1" stroke="#707070" stroke-width="1" />
<line x1="687.5" y1="474" x2="687.5" y2="490.6" stroke="#707070" stroke-width="1" />
<text x="650.7" y="485.20000000000005" font-size="7.54" fill="#202020" textLength="8.6" lengthAdjust="spacingAndGlyphs" stroke="#202020" stroke-width="0.12">OK</text>
<rect x="621" y="494" width="67" height="15.600000000000023" fill="#e8e8e8" />
<line x1="621" y1="494.4" x2="688" y2="494.4" stroke="#ffffff" stroke-width="0.8" />
<line x1="621.4" y1="494" x2="621.4" y2="509.6" stroke="#ffffff" stroke-width="0.8" />
<line x1="621" y1="509.1" x2="688" y2="509.1" stroke="#707070" stroke-width="1" />
<line x1="687.5" y1="494" x2="687.5" y2="509.6" stroke="#707070" stroke-width="1" />
<text x="640.7" y="504.20000000000005" font-size="7.54" fill="#202020" textLength="27.6" lengthAdjust="spacingAndGlyphs" stroke="#202020" stroke-width="0.12">ANNULLA</text>
<rect x="237.4" y="536" width="19.6" height="9" fill="#ffffff" />
<line x1="237.4" y1="536.3" x2="257" y2="536.3" stroke="#a0a0a0" stroke-width="0.7" />
<line x1="237.7" y1="536" x2="237.7" y2="545" stroke="#a0a0a0" stroke-width="0.7" />
<rect x="250" y="537" width="6.5" height="7" fill="#e8e8e8" />
<polygon points="251.8,540 254.8,540 253.3,542" fill="#000" stroke="none" stroke-width="1" />
<text x="239.2" y="543.3" font-size="6.96" fill="#202020" textLength="5.1" lengthAdjust="spacingAndGlyphs" stroke="#202020" stroke-width="0.12">IT</text>
<text x="443.3" y="543.2" font-size="7.54" fill="#202020" textLength="42.0" lengthAdjust="spacingAndGlyphs" stroke="#202020" stroke-width="0.12">C25/30 - B450C</text>
<text x="658.7" y="543" font-size="7.97" fill="#202020" textLength="38.6" lengthAdjust="spacingAndGlyphs" stroke="#202020" stroke-width="0.12">X= 443 Y=-201</text>
</svg>
</body></html>
